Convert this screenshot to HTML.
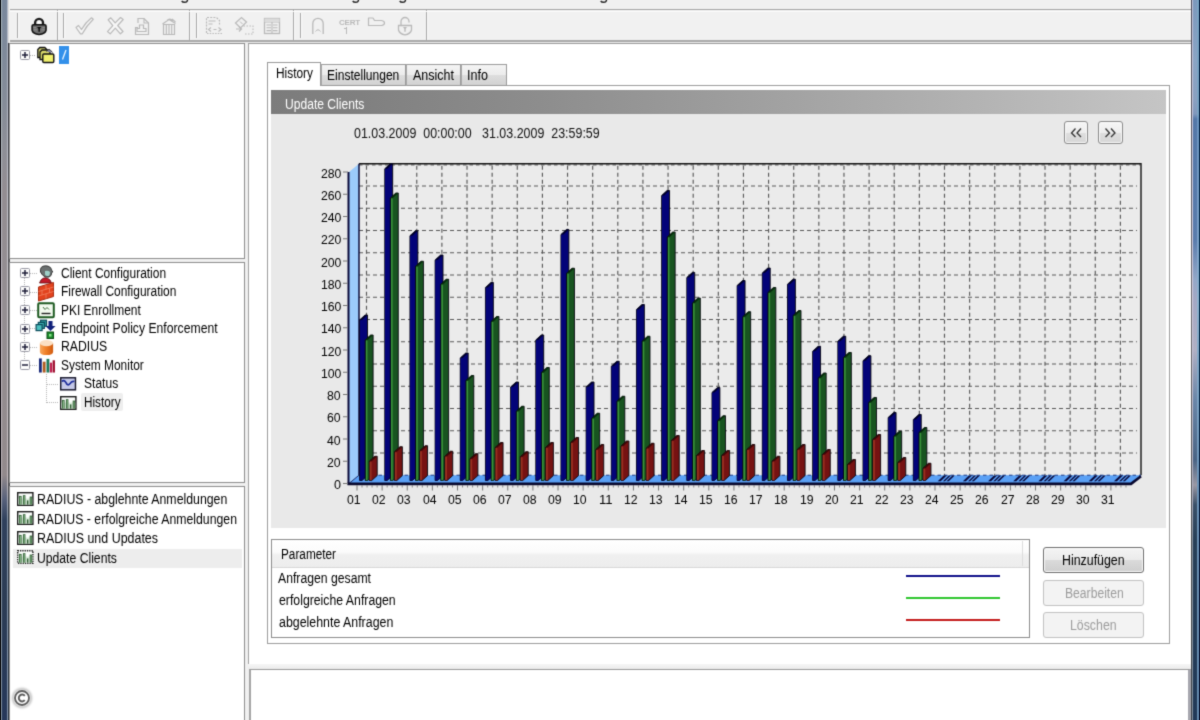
<!DOCTYPE html>
<html><head><meta charset="utf-8"><title>History</title>
<style>
html,body{margin:0;padding:0}
html{overflow:hidden;width:1200px;height:720px}
body{width:1200px;height:720px;position:relative;overflow:hidden;background:#f0f0f0;font-family:"Liberation Sans",sans-serif;font-size:13px;color:#000}
.t{position:absolute;white-space:pre;line-height:1;transform-origin:0 0}
.abs{position:absolute}
.pane{position:absolute;background:#fff;border:1px solid #8e8e8e;box-sizing:border-box}
svg{position:absolute;overflow:visible}
#clip{position:absolute;left:0;top:0;width:1200px;height:720px;overflow:hidden}
#w{position:absolute;left:0;top:0;width:1200px;height:720px;filter:url(#soft)}
</style></head><body><svg width="0" height="0" style="position:absolute"><defs><filter id="soft" x="-0.4%" y="-0.7%" width="100.8%" height="101.4%" color-interpolation-filters="sRGB"><feConvolveMatrix order="3" kernelMatrix="0.02 0.1 0.02 0.1 0.52 0.1 0.02 0.1 0.02" edgeMode="duplicate" preserveAlpha="true"/></filter></defs></svg><div id="clip"><div id="w">

<div style="position:absolute;left:-6px;top:-6px;width:1212px;height:732px;background:#f0f0f0"></div>
<div style="position:absolute;left:0px;top:-6px;width:8px;height:732px;background:linear-gradient(to bottom,#78879c 6px,#858c98 106px,#8e8f97 156px,#938d92 196px,#948e92 314px,#928a8c 481px,#56607a 506px,#2f405c 526px,#2c3c54 606px,#26385a 726px)"></div>
<div style="position:absolute;left:-6px;top:-6px;width:7px;height:732px;background:linear-gradient(to bottom,#000408 6px,#140c14 314px,#000004 506px,#000000 726px)"></div>
<div style="position:absolute;left:1px;top:-6px;width:1px;height:732px;background:linear-gradient(to bottom,#a8b6c0 6px,#b0bcc0 106px,#c8c0c8 314px,#c0b8bc 486px,#8a98a8 526px,#8494a4 726px)"></div>
<div style="position:absolute;left:7px;top:-6px;width:1px;height:732px;background:linear-gradient(to bottom,#b0b8c8 6px,#b8bcc8 106px,#d0ccd0 314px,#c8c0c4 486px,#8a9aac 526px,#8696ac 726px)"></div>
<div style="position:absolute;left:8px;top:43px;width:2px;height:683px;background:linear-gradient(to bottom,#34363f 0px,#34363f 57px,#55555b 157px,#5c5a5e 265px,#585659 437px,#2c3644 477px,#28323e 683px)"></div>
<div style="position:absolute;left:8px;top:-6px;width:1px;height:49px;background:#dcdcdc"></div>
<div style="position:absolute;left:1192px;top:-6px;width:8px;height:732px;background:linear-gradient(to bottom,#7c98bc 6px,#8aa4c4 66px,#8aa0c0 106px,#8098bc 120px,#5478a8 125px,#5a7cac 246px,#94a8c8 286px,#a4a8c4 306px,#b0b0c4 356px,#6a86a8 406px,#4a6484 466px,#9a98a4 491px,#3a5068 511px,#284058 546px,#223a58 726px)"></div>
<div style="position:absolute;left:1191px;top:-6px;width:1px;height:732px;background:linear-gradient(to bottom,#484858 6px,#68686e 306px,#404448 606px,#3a4048 726px)"></div>
<div style="position:absolute;left:1192px;top:-6px;width:1px;height:732px;background:linear-gradient(to bottom,#c0c4dc 6px,#d0cce0 306px,#b0b0c0 506px,#8a96a4 546px,#8492a0 726px)"></div>
<div style="position:absolute;left:1197px;top:-6px;width:2px;height:732px;background:linear-gradient(to bottom,#7aa4c4 6px,#7aa4c4 120px,#6a94c0 125px,#7aa0c8 246px,#90b4d0 306px,#7098bc 466px,#6a90b4 546px,#648aae 726px)"></div>
<div style="position:absolute;left:1198.5px;top:-6px;width:7.5px;height:732px;background:linear-gradient(to bottom,#00183a 6px,#002c4a 306px,#000a2c 606px,#000824 726px)"></div>
<div style="position:absolute;left:10px;top:9px;width:1181px;height:1px;background:#a5a5a5"></div>
<svg style="left:181px;top:0" width="8" height="4" viewBox="0 0 8 4"><path d="M6.500 -1 Q6.800 2.300 3.600 2.300 Q1.400 2.300 .8 .9" fill="none" stroke="#2a2a2a" stroke-width="1.500"/></svg>
<svg style="left:352px;top:0" width="8" height="4" viewBox="0 0 8 4"><path d="M6.500 -1 Q6.800 2.300 3.600 2.300 Q1.400 2.300 .8 .9" fill="none" stroke="#2a2a2a" stroke-width="1.500"/></svg>
<svg style="left:399px;top:0" width="8" height="4" viewBox="0 0 8 4"><path d="M6.500 -1 Q6.800 2.300 3.600 2.300 Q1.400 2.300 .8 .9" fill="none" stroke="#2a2a2a" stroke-width="1.500"/></svg>
<svg style="left:600px;top:0" width="8" height="4" viewBox="0 0 8 4"><path d="M6.500 -1 Q6.800 2.300 3.600 2.300 Q1.400 2.300 .8 .9" fill="none" stroke="#2a2a2a" stroke-width="1.500"/></svg>
<div style="position:absolute;left:10px;top:10px;width:1181px;height:30px;background:#f1f1f1"></div>
<div style="position:absolute;left:10px;top:40px;width:1181px;height:2px;background:#a9a9a9"></div>
<div style="position:absolute;left:10px;top:42px;width:1181px;height:2px;background:#ececec"></div>
<div style="position:absolute;left:17px;top:13px;width:1px;height:25px;background:#a8a8a8"></div><div style="position:absolute;left:18px;top:13px;width:1px;height:25px;background:#fdfdfd"></div>
<div style="position:absolute;left:63px;top:13px;width:1px;height:25px;background:#a8a8a8"></div><div style="position:absolute;left:64px;top:13px;width:1px;height:25px;background:#fdfdfd"></div>
<div style="position:absolute;left:196px;top:13px;width:1px;height:25px;background:#a8a8a8"></div><div style="position:absolute;left:197px;top:13px;width:1px;height:25px;background:#fdfdfd"></div>
<div style="position:absolute;left:300px;top:13px;width:1px;height:25px;background:#a8a8a8"></div><div style="position:absolute;left:301px;top:13px;width:1px;height:25px;background:#fdfdfd"></div>
<div style="position:absolute;left:57px;top:10px;width:1px;height:30px;background:#a8a8a8"></div><div style="position:absolute;left:58px;top:10px;width:1px;height:30px;background:#fafafa"></div>
<div style="position:absolute;left:189px;top:10px;width:1px;height:30px;background:#a8a8a8"></div><div style="position:absolute;left:190px;top:10px;width:1px;height:30px;background:#fafafa"></div>
<div style="position:absolute;left:293px;top:10px;width:1px;height:30px;background:#a8a8a8"></div><div style="position:absolute;left:294px;top:10px;width:1px;height:30px;background:#fafafa"></div>
<div style="position:absolute;left:426px;top:10px;width:1px;height:30px;background:#a8a8a8"></div><div style="position:absolute;left:427px;top:10px;width:1px;height:30px;background:#fafafa"></div>
<div style="position:absolute;left:10px;top:11px;width:1181px;height:1px;background:#fbfbfb"></div>
<svg style="left:30.500px;top:18.000px" width="16.500" height="17.600" viewBox="0 0 18 19">
<path d="M4.5 8 V5.2 a4.3 4.3 0 0 1 8.6 0 V8" fill="none" stroke="#1a1a1a" stroke-width="2.6"/>
<rect x="7.4" y="3.6" width="3" height="3" fill="#fff" stroke="none"/>
<path d="M1.2 8.6 q0 -1.4 1.6 -1.4 h12 q1.6 0 1.6 1.4 v4.6 q-1 4 -7.6 4.6 q-6.600 -.6 -7.600 -4.6 z" fill="#6e6e6e" stroke="#111" stroke-width="1.7"/>
<path d="M6.6 9.6 h4.600 l-1.500 2 v3.400 h-1.600 v-3.400 z" fill="#0a0a0a"/>
<path d="M2.5 10.500 h3 M12.300 10.500 h3 M2.900 12.800 h3.500 M11.500 12.800 h3.500" stroke="#9a9a9a" stroke-width=".9"/>
</svg>
<svg style="left:74px;top:16px" width="21" height="20" viewBox="0 0 21 20">
<path d="M2 11.500 L4.500 9.500 L7.500 13.500 Q11.500 6.500 17.500 1.800 L19.300 3.200 Q12.500 9.500 8.300 17.800 L6.500 17.800 Z" fill="#f6f6f6" stroke="#b9b9b9" stroke-width="1.2" stroke-linejoin="round"/>
</svg>
<svg style="left:105px;top:16px" width="21" height="20" viewBox="0 0 21 20">
<path d="M3.200 3.800 L5.800 1.800 L10.200 6.800 L15.500 1.500 L18.200 3.500 L12.700 9.500 L18 15.500 L15.400 17.800 L10.300 12.200 L5.200 17.800 L2.500 15.600 L7.800 9.600 Z" fill="#f6f6f6" stroke="#b9b9b9" stroke-width="1.2" stroke-linejoin="round"/>
</svg>
<svg style="left:134px;top:17px" width="16" height="19" viewBox="0 0 16 19">
<path d="M4 6 V1.500 h6 l4.500 4.500 V17.500 H1.500 V10.500 h2.500" fill="none" stroke="#b9b9b9" stroke-width="1.2"/>
<path d="M10 1.500 v4.500 h4.500" fill="none" stroke="#b9b9b9" stroke-width="1.100"/>
<path d="M5.500 8 h4 v3.500 h2.500 v3 h-9 v-3 h2.500 z" fill="none" stroke="#b9b9b9" stroke-width="1.200"/>
</svg>
<svg style="left:161px;top:17px" width="17" height="19" viewBox="0 0 17 19">
<path d="M2.500 7.500 h11 v10 h-11 z" fill="none" stroke="#b9b9b9" stroke-width="1.200"/>
<path d="M5.300 8 v9 M8 8 v9 M10.700 8 v9" stroke="#b9b9b9" stroke-width="1.100"/>
<path d="M1.500 7 L8 2.500 L14.500 6.500 M6 3.500 q3 -3 5.500 .5 M11 2 l3.500 3" fill="none" stroke="#b9b9b9" stroke-width="1.100"/>
</svg>
<svg style="left:205px;top:16px" width="20" height="19" viewBox="0 0 20 19">
<path d="M1.500 17 V1.500 h10 l3 3 v4" fill="none" stroke="#b9b9b9" stroke-width="1.200" stroke-dasharray="2 1.200"/>
<path d="M3.500 5 h7 M3.500 8 h4" stroke="#b9b9b9" stroke-width="1.100"/>
<path d="M6 11.500 l-2.500 2 l2.500 2 M13.500 11.500 l2.500 2 l-2.500 2 M8.500 13.500 h3" fill="none" stroke="#b9b9b9" stroke-width="1.100"/>
<path d="M2 17.500 h16" stroke="#b9b9b9" stroke-width="1.100" stroke-dasharray="1.500 1.200"/>
</svg>
<svg style="left:233px;top:16px" width="22" height="20" viewBox="0 0 22 20">
<path d="M2.500 7 L8.500 1.500 L13.500 6 L7.500 12 Z" fill="none" stroke="#b9b9b9" stroke-width="1.200"/>
<path d="M7 5.500 l2.500 2.500" stroke="#b9b9b9" stroke-width="1"/>
<path d="M3 13 h5 M6 10.500 l2.500 2.500 l-2.500 2.500" fill="none" stroke="#b9b9b9" stroke-width="1.200"/>
<path d="M10.500 10 h9.500 v8 h-9.500" fill="none" stroke="#b9b9b9" stroke-width="1.100" stroke-dasharray="1.500 1.500"/>
</svg>
<svg style="left:263px;top:17px" width="18" height="18" viewBox="0 0 18 18">
<rect x="1.500" y="1.500" width="15" height="15" fill="none" stroke="#b9b9b9" stroke-width="1.300"/>
<path d="M1.500 5 h15 M3.500 8 h4.500 M10 8 h4.500 M3.500 10.800 h4.500 M10 10.800 h4.500 M3.500 13.600 h4.500 M10 13.600 h4.500 M9 5 v11.500" stroke="#b9b9b9" stroke-width="1.100"/>
<rect x="1.500" y="1.500" width="15" height="3.500" fill="#dcdcdc" stroke="none"/>
</svg>
<svg style="left:311px;top:17px" width="14" height="18" viewBox="0 0 14 18">
<path d="M1.800 17 V6.500 a5.200 5.200 0 0 1 10.400 0 V17" fill="none" stroke="#b9b9b9" stroke-width="1.300"/>
<path d="M4.500 14.500 q2.500 -3.500 5 0" fill="none" stroke="#b9b9b9" stroke-width="1"/>
</svg>
<span class="t" style="left:339px;top:18.500px;font-size:8px;font-weight:bold;color:#b9b9b9;letter-spacing:-.2px">CERT</span>
<div style="position:absolute;left:346px;top:27px;width:1px;height:7px;background:#b9b9b9"></div>
<div style="position:absolute;left:344px;top:28px;width:2px;height:1px;background:#b9b9b9"></div>
<svg style="left:367px;top:16px" width="19" height="12" viewBox="0 0 19 12">
<path d="M1.500 9.500 V2 h4.500 l1.500 2.500 h7 q3 .5 3 2.500 q0 2 -3 2.500 z" fill="none" stroke="#b9b9b9" stroke-width="1.200" stroke-linejoin="round"/>
</svg>
<svg style="left:397px;top:16px" width="16" height="20" viewBox="0 0 16 20">
<path d="M4 9 V5.500 a4 4 0 0 1 8 0 V6.500" fill="none" stroke="#b9b9b9" stroke-width="1.300"/>
<path d="M1.500 9.500 h13 v4.500 q-1 4 -6.500 4.800 q-5.500 -.8 -6.500 -4.800 z" fill="none" stroke="#b9b9b9" stroke-width="1.300"/>
<path d="M6 11 h4 l-1.300 1.800 v3 h-1.400 v-3 z" fill="#b9b9b9"/>
</svg>
<div class="pane" style="left:9px;top:43px;width:236px;height:216px"></div>
<div class="pane" style="left:9px;top:262px;width:236px;height:221px"></div>
<div class="pane" style="left:9px;top:486px;width:236px;height:246px"></div>
<div style="position:absolute;left:245px;top:44px;width:3px;height:682px;background:#f0f0f0"></div>
<svg style="left:20px;top:50px" width="10" height="10" viewBox="0 0 10 10"><rect x=".5" y=".5" width="9" height="9" rx="1" fill="#fdfdfd" stroke="#9a9aa5" stroke-width="1"/><path d="M2 5 h6" stroke="#1e1e38" stroke-width="1.500"/><path d="M5 2 v6" stroke="#1e1e38" stroke-width="1.500"/></svg>
<div style="position:absolute;left:30px;top:55px;width:6px;height:1px;background:repeating-linear-gradient(to right,#b0b0b0 0 1px,transparent 1px 2px)"></div>
<svg style="left:36px;top:46px" width="20" height="18" viewBox="0 0 20 18">
<path d="M1.800 3.500 l2 -2 h5 l2 2 v8 h-9 z" fill="#c9c96a" stroke="#111" stroke-width="1.300"/>
<path d="M4 6 l2 -2 h5.500 l2.500 2 v7.500 h-10 z" fill="#d8d86a" stroke="#111" stroke-width="1.300"/>
<path d="M10.500 5.500 l1.500 -1.800 h2 l2.500 2.800" fill="#8a8ab0" stroke="#333" stroke-width="1"/>
<rect x="6.800" y="8" width="11" height="8.500" rx="1" fill="#f1f16e" stroke="#111" stroke-width="1.400"/>
</svg>
<div style="position:absolute;left:59px;top:46px;width:10px;height:18px;background:#3390ea"></div>
<svg style="left:59px;top:46px" width="10" height="18"><path d="M3.500 13.500 L7 4" stroke="#e8f4ff" stroke-width="1.300"/></svg>
<div style="position:absolute;left:24px;top:278px;width:1px;height:88px;background:repeating-linear-gradient(to bottom,#b5b5b5 0 1px,transparent 1px 2px)"></div>
<div style="position:absolute;left:46px;top:374px;width:1px;height:29px;background:repeating-linear-gradient(to bottom,#b5b5b5 0 1px,transparent 1px 2px)"></div>
<svg style="left:20px;top:268px" width="10" height="10" viewBox="0 0 10 10"><rect x=".5" y=".5" width="9" height="9" rx="1" fill="#fdfdfd" stroke="#9a9aa5" stroke-width="1"/><path d="M2 5 h6" stroke="#1e1e38" stroke-width="1.500"/><path d="M5 2 v6" stroke="#1e1e38" stroke-width="1.500"/></svg>
<div style="position:absolute;left:30px;top:273px;width:7px;height:1px;background:repeating-linear-gradient(to right,#b5b5b5 0 1px,transparent 1px 2px)"></div>
<span class="t" style="left:61.40px;top:265.75px;font-size:14px;color:#000;transform:scaleX(0.8547);">Client Configuration</span>
<svg style="left:20px;top:286px" width="10" height="10" viewBox="0 0 10 10"><rect x=".5" y=".5" width="9" height="9" rx="1" fill="#fdfdfd" stroke="#9a9aa5" stroke-width="1"/><path d="M2 5 h6" stroke="#1e1e38" stroke-width="1.500"/><path d="M5 2 v6" stroke="#1e1e38" stroke-width="1.500"/></svg>
<div style="position:absolute;left:30px;top:292px;width:7px;height:1px;background:repeating-linear-gradient(to right,#b5b5b5 0 1px,transparent 1px 2px)"></div>
<span class="t" style="left:61.40px;top:284.15px;font-size:14px;color:#000;transform:scaleX(0.8523);">Firewall Configuration</span>
<svg style="left:20px;top:305px" width="10" height="10" viewBox="0 0 10 10"><rect x=".5" y=".5" width="9" height="9" rx="1" fill="#fdfdfd" stroke="#9a9aa5" stroke-width="1"/><path d="M2 5 h6" stroke="#1e1e38" stroke-width="1.500"/><path d="M5 2 v6" stroke="#1e1e38" stroke-width="1.500"/></svg>
<div style="position:absolute;left:30px;top:310px;width:7px;height:1px;background:repeating-linear-gradient(to right,#b5b5b5 0 1px,transparent 1px 2px)"></div>
<span class="t" style="left:61.40px;top:302.65px;font-size:14px;color:#000;transform:scaleX(0.8546);">PKI Enrollment</span>
<svg style="left:20px;top:324px" width="10" height="10" viewBox="0 0 10 10"><rect x=".5" y=".5" width="9" height="9" rx="1" fill="#fdfdfd" stroke="#9a9aa5" stroke-width="1"/><path d="M2 5 h6" stroke="#1e1e38" stroke-width="1.500"/><path d="M5 2 v6" stroke="#1e1e38" stroke-width="1.500"/></svg>
<div style="position:absolute;left:30px;top:328px;width:7px;height:1px;background:repeating-linear-gradient(to right,#b5b5b5 0 1px,transparent 1px 2px)"></div>
<span class="t" style="left:61.40px;top:321.15px;font-size:14px;color:#000;transform:scaleX(0.8711);">Endpoint Policy Enforcement</span>
<svg style="left:20px;top:342px" width="10" height="10" viewBox="0 0 10 10"><rect x=".5" y=".5" width="9" height="9" rx="1" fill="#fdfdfd" stroke="#9a9aa5" stroke-width="1"/><path d="M2 5 h6" stroke="#1e1e38" stroke-width="1.500"/><path d="M5 2 v6" stroke="#1e1e38" stroke-width="1.500"/></svg>
<div style="position:absolute;left:30px;top:347px;width:7px;height:1px;background:repeating-linear-gradient(to right,#b5b5b5 0 1px,transparent 1px 2px)"></div>
<span class="t" style="left:61.40px;top:339.45px;font-size:14px;color:#000;transform:scaleX(0.8732);">RADIUS</span>
<svg style="left:20px;top:360px" width="10" height="10" viewBox="0 0 10 10"><rect x=".5" y=".5" width="9" height="9" rx="1" fill="#fdfdfd" stroke="#9a9aa5" stroke-width="1"/><path d="M2 5 h6" stroke="#1e1e38" stroke-width="1.500"/></svg>
<div style="position:absolute;left:30px;top:365px;width:7px;height:1px;background:repeating-linear-gradient(to right,#b5b5b5 0 1px,transparent 1px 2px)"></div>
<span class="t" style="left:61.40px;top:357.95px;font-size:14px;color:#000;transform:scaleX(0.8514);">System Monitor</span>
<div style="position:absolute;left:47px;top:384px;width:12px;height:1px;background:repeating-linear-gradient(to right,#b5b5b5 0 1px,transparent 1px 2px)"></div>
<span class="t" style="left:83.60px;top:376.35px;font-size:14px;color:#000;transform:scaleX(0.8614);">Status</span>
<div style="position:absolute;left:47px;top:402px;width:12px;height:1px;background:repeating-linear-gradient(to right,#b5b5b5 0 1px,transparent 1px 2px)"></div>
<div style="position:absolute;left:81px;top:393px;width:42px;height:18px;background:#eeeeee;border-radius:2px"></div>
<span class="t" style="left:83.60px;top:394.75px;font-size:14px;color:#000;transform:scaleX(0.8402);">History</span>
<svg style="left:37px;top:264px" width="18" height="20" viewBox="0 0 18 20">
<path d="M4 16 q4 -4.500 9 0 l1.500 3 h-12 z" fill="#c21a2a" stroke="#5a0a10" stroke-width=".8"/>
<path d="M3.500 8 q-1 -6 5 -6.200 q5.500 .2 6 4.200 l1.300 2 l-1.200 .6 q.3 3.400 -2.600 4.400 q-4 1 -6.500 -2 z" fill="#6b7070" stroke="#2a2a2a" stroke-width=".9"/>
<path d="M8 7 q3 -1 5 1 q0 3 -1.500 4 q-2.500 .5 -3.500 -1.500 z" fill="#9ed0c8"/>
</svg>
<svg style="left:37px;top:281px" width="18" height="21" viewBox="0 0 18 21">
<path d="M1.500 6 L16.500 1.500 V15.500 L1.500 20 Z" fill="#e2431e" stroke="#a82a10" stroke-width="1"/>
<path d="M1.500 10.500 L16.500 6 M1.500 15 L16.500 10.500 M9 3.800 v4.500 M5 9.500 v4.500 M12.500 7.300 v4.500 M9 13 v4.500" stroke="#f08060" stroke-width=".8"/>
</svg>
<svg style="left:37px;top:302px" width="18" height="17" viewBox="0 0 18 17">
<rect x="1.200" y="1.200" width="15.600" height="14" rx="1" fill="#f4fbf0" stroke="#1e5a22" stroke-width="2"/>
<path d="M4.500 11.500 h9" stroke="#222" stroke-width="1.400"/>
<path d="M6 5 l2 2.500 l2 -2 l2 2" fill="none" stroke="#3a6a3a" stroke-width="1"/>
</svg>
<svg style="left:35px;top:319px" width="22" height="20" viewBox="0 0 22 20">
<rect x="5.500" y="1.200" width="6" height="6" fill="#2a9a9a" stroke="#0a4a5a" stroke-width="1.200"/>
<rect x="3.300" y="3.400" width="6" height="6" fill="#3ab0b0" stroke="#0a4a5a" stroke-width="1.200"/>
<rect x="1.100" y="5.600" width="6" height="6" fill="#4cc0c0" stroke="#0a4a5a" stroke-width="1.200"/>
<path d="M13.500 2 h4 v5 h3 l-5 5 l-5 -5 h3 z" fill="#10207a"/>
<rect x="12" y="13" width="6.500" height="6.500" fill="#1a8a2a" stroke="#0a4a12" stroke-width="1"/>
<rect x="14" y="15" width="2.500" height="2.500" fill="#8ae08a"/>
</svg>
<svg style="left:38.500px;top:338.500px" width="15" height="17" viewBox="0 0 17 19">
<defs><linearGradient id="rg" x1="0" x2="1"><stop offset="0" stop-color="#f6a860"/><stop offset=".45" stop-color="#f08028"/><stop offset="1" stop-color="#d05a10"/></linearGradient></defs>
<path d="M1 4.500 v10 q0 3.500 7.500 3.500 q7.500 0 7.500 -3.500 v-10 z" fill="url(#rg)"/>
<ellipse cx="8.500" cy="4.500" rx="7.500" ry="3.500" fill="#fbe0c4"/>
</svg>
<svg style="left:37.500px;top:356.800px" width="17" height="16" viewBox="0 0 18 17">
<rect x="1" y="1.500" width="3" height="15" fill="#1a2a7a"/>
<rect x="5" y="5" width="3" height="11.500" fill="#b05a20"/>
<rect x="9" y="2" width="3" height="14.500" fill="#1a7a5a"/>
<rect x="12.500" y="6" width="2.500" height="10.500" fill="#c02050"/>
<rect x="15.500" y="3.500" width="2.500" height="13" fill="#a01030"/>
</svg>
<svg style="left:59.800px;top:377.300px" width="16.200" height="13.600" viewBox="0 0 18 15">
<rect x=".8" y=".8" width="16.400" height="13.400" fill="#c5c9e8" stroke="#15152a" stroke-width="1.600"/>
<path d="M2 5 q2.500 -2.500 4.500 1 q2 4.500 4.500 1.500 q2 -3.500 5 -2.500" fill="none" stroke="#1a2a9a" stroke-width="1.800"/>
</svg>
<svg style="left:59.8px;top:395.8px" width="17" height="14" viewBox="0 0 17 14"><rect x=".7" y=".7" width="15.200" height="12.600" fill="#fcfefc" stroke="#1c1c1c" stroke-width="1.400"/><rect x="1.500" y="6.500" width="13.700" height="6" fill="#dcecdc"/><rect x="1.9" y="3.9" width="2.7" height="8.7" fill="#2e5e32"/><rect x="2.8" y="4.7" width="1.0" height="7.9" fill="#9cc89c"/><rect x="5.9" y="3.2" width="2.5" height="9.4" fill="#2e5e32"/><rect x="6.8" y="4.0" width="0.8" height="8.6" fill="#9cc89c"/><rect x="9.9" y="8.4" width="1.5" height="4.2" fill="#2e5e32"/><rect x="12.7" y="4.6" width="2.5" height="8.0" fill="#2e5e32"/><rect x="13.6" y="5.4" width="0.8" height="7.2" fill="#9cc89c"/></svg>
<div style="position:absolute;left:13px;top:549px;width:229px;height:19px;background:#ededed"></div>
<svg style="left:17.1px;top:491.5px" width="17" height="14" viewBox="0 0 17 14"><rect x=".7" y=".7" width="15.200" height="12.600" fill="#fcfefc" stroke="#1c1c1c" stroke-width="1.400"/><rect x="1.500" y="6.500" width="13.700" height="6" fill="#dcecdc"/><rect x="1.9" y="3.9" width="2.7" height="8.7" fill="#2e5e32"/><rect x="2.8" y="4.7" width="1.0" height="7.9" fill="#9cc89c"/><rect x="5.9" y="3.2" width="2.5" height="9.4" fill="#2e5e32"/><rect x="6.8" y="4.0" width="0.8" height="8.6" fill="#9cc89c"/><rect x="9.9" y="8.4" width="1.5" height="4.2" fill="#2e5e32"/><rect x="12.7" y="4.6" width="2.5" height="8.0" fill="#2e5e32"/><rect x="13.6" y="5.4" width="0.8" height="7.2" fill="#9cc89c"/></svg>
<span class="t" style="left:37.30px;top:492.25px;font-size:14px;color:#000;transform:scaleX(0.8796);">RADIUS - abglehnte Anmeldungen</span>
<svg style="left:17.1px;top:511.19999999999993px" width="17" height="14" viewBox="0 0 17 14"><rect x=".7" y=".7" width="15.200" height="12.600" fill="#fcfefc" stroke="#1c1c1c" stroke-width="1.400"/><rect x="1.500" y="6.500" width="13.700" height="6" fill="#dcecdc"/><rect x="1.9" y="3.9" width="2.7" height="8.7" fill="#2e5e32"/><rect x="2.8" y="4.7" width="1.0" height="7.9" fill="#9cc89c"/><rect x="5.9" y="3.2" width="2.5" height="9.4" fill="#2e5e32"/><rect x="6.8" y="4.0" width="0.8" height="8.6" fill="#9cc89c"/><rect x="9.9" y="8.4" width="1.5" height="4.2" fill="#2e5e32"/><rect x="12.7" y="4.6" width="2.5" height="8.0" fill="#2e5e32"/><rect x="13.6" y="5.4" width="0.8" height="7.2" fill="#9cc89c"/></svg>
<span class="t" style="left:37.30px;top:511.95px;font-size:14px;color:#000;transform:scaleX(0.8771);">RADIUS - erfolgreiche Anmeldungen</span>
<svg style="left:17.1px;top:530.6px" width="17" height="14" viewBox="0 0 17 14"><rect x=".7" y=".7" width="15.200" height="12.600" fill="#fcfefc" stroke="#1c1c1c" stroke-width="1.400"/><rect x="1.500" y="6.500" width="13.700" height="6" fill="#dcecdc"/><rect x="1.9" y="3.9" width="2.7" height="8.7" fill="#2e5e32"/><rect x="2.8" y="4.7" width="1.0" height="7.9" fill="#9cc89c"/><rect x="5.9" y="3.2" width="2.5" height="9.4" fill="#2e5e32"/><rect x="6.8" y="4.0" width="0.8" height="8.6" fill="#9cc89c"/><rect x="9.9" y="8.4" width="1.5" height="4.2" fill="#2e5e32"/><rect x="12.7" y="4.6" width="2.5" height="8.0" fill="#2e5e32"/><rect x="13.6" y="5.4" width="0.8" height="7.2" fill="#9cc89c"/></svg>
<span class="t" style="left:37.30px;top:531.35px;font-size:14px;color:#000;transform:scaleX(0.8885);">RADIUS und Updates</span>
<svg style="left:17.1px;top:550.3px" width="17" height="14" viewBox="0 0 17 14"><rect x=".7" y=".7" width="15.200" height="12.600" fill="#fcfefc" stroke="#1c1c1c" stroke-width="1.400" stroke-dasharray="1.300 1"/><rect x="1.500" y="6.500" width="13.700" height="6" fill="#dcecdc"/><rect x="1.9" y="3.9" width="2.7" height="8.7" fill="#2e5e32"/><rect x="2.8" y="4.7" width="1.0" height="7.9" fill="#9cc89c"/><rect x="5.9" y="3.2" width="2.5" height="9.4" fill="#2e5e32"/><rect x="6.8" y="4.0" width="0.8" height="8.6" fill="#9cc89c"/><rect x="9.9" y="8.4" width="1.5" height="4.2" fill="#2e5e32"/><rect x="12.7" y="4.6" width="2.5" height="8.0" fill="#2e5e32"/><rect x="13.6" y="5.4" width="0.8" height="7.2" fill="#9cc89c"/></svg>
<span class="t" style="left:37.30px;top:551.05px;font-size:14px;color:#000;transform:scaleX(0.8701);">Update Clients</span>
<svg style="left:9.200px;top:684.800px" width="26" height="26" viewBox="0 0 26 26">
<defs><radialGradient id="cg"><stop offset=".55" stop-color="#fff" stop-opacity="1"/><stop offset=".75" stop-color="#bbb" stop-opacity=".7"/><stop offset="1" stop-color="#fff" stop-opacity="0"/></radialGradient></defs>
<circle cx="13" cy="13" r="12.500" fill="url(#cg)"/>
<circle cx="13" cy="13" r="7" fill="#fff" stroke="#5c5c5c" stroke-width="1.800"/>
<path d="M15.800 10.800 a3.400 3.400 0 1 0 0 4.400" fill="none" stroke="#5c5c5c" stroke-width="2"/>
</svg>
<div style="position:absolute;left:248px;top:43px;width:943px;height:621px;background:#fff;border-top:1px solid #9a9a9a;border-left:1px solid #a2a2a2;box-sizing:border-box"></div>
<div style="position:absolute;left:248px;top:664px;width:943px;height:5px;background:linear-gradient(to bottom,#f6f6f6,#ebebeb)"></div>
<div style="position:absolute;left:249px;top:669px;width:942px;height:57px;background:#fff;border-top:1px solid #9a9a9a;border-left:2px solid #a4a4a4;border-right:3px solid #a6a6ae;box-sizing:border-box"></div>
<div class="abs" style="left:267px;top:85px;width:903px;height:559px;box-sizing:border-box;border:1px solid #9c9c9c;background:#fff"></div>
<div class="abs" style="left:321px;top:64px;width:85px;height:22px;box-sizing:border-box;border:1px solid #9a9a9a;border-left-color:#a8a8a8;background:linear-gradient(to bottom,#f4f4f4 0,#ececec 48%,#dddddd 52%,#d2d2d2 100%)"></div>
<span class="t" style="left:327.20px;top:68.35px;font-size:14px;color:#000;transform:scaleX(0.8601);">Einstellungen</span>
<div class="abs" style="left:406px;top:64px;width:55px;height:22px;box-sizing:border-box;border:1px solid #9a9a9a;border-left-color:#a8a8a8;background:linear-gradient(to bottom,#f4f4f4 0,#ececec 48%,#dddddd 52%,#d2d2d2 100%)"></div>
<span class="t" style="left:412.50px;top:68.35px;font-size:14px;color:#000;transform:scaleX(0.8928);">Ansicht</span>
<div class="abs" style="left:461px;top:64px;width:46px;height:22px;box-sizing:border-box;border:1px solid #9a9a9a;border-left-color:#a8a8a8;background:linear-gradient(to bottom,#f4f4f4 0,#ececec 48%,#dddddd 52%,#d2d2d2 100%)"></div>
<span class="t" style="left:467.30px;top:68.35px;font-size:14px;color:#000;transform:scaleX(0.8990);">Info</span>
<div class="abs" style="left:267px;top:62px;width:54px;height:24px;box-sizing:border-box;border:1px solid #9a9a9a;border-bottom:none;background:#fff"></div>
<span class="t" style="left:276.20px;top:66.35px;font-size:14px;color:#000;transform:scaleX(0.8494);">History</span>
<div style="position:absolute;left:271px;top:90px;width:895px;height:24px;background:linear-gradient(to right,#7c7c7c 0,#808080 10%,#8d8d8d 30%,#a0a0a0 55%,#b4b4b4 80%,#c5c5c5 100%)"></div>
<span class="t" style="left:284.50px;top:96.75px;font-size:14px;color:#fff;transform:scaleX(0.8636);">Update Clients</span>
<div style="position:absolute;left:271px;top:114px;width:895px;height:414px;background:#e9e9e9"></div>
<span class="t" style="left:353.80px;top:125.75px;font-size:14px;color:#111;transform:scaleX(0.8891);">01.03.2009  00:00:00   31.03.2009  23:59:59</span>
<div class="abs" style="left:1064px;top:121px;width:24px;height:23px;box-sizing:border-box;border:1px solid #8a8a8a;border-radius:3px;background:linear-gradient(to bottom,#f6f6f6 0,#ededed 50%,#dedede 52%,#d6d6d6 100%);box-shadow:inset 0 0 0 1px #fafafa"></div>
<div class="abs" style="left:1098px;top:121px;width:24.5px;height:23px;box-sizing:border-box;border:1px solid #8a8a8a;border-radius:3px;background:linear-gradient(to bottom,#f6f6f6 0,#ededed 50%,#dedede 52%,#d6d6d6 100%);box-shadow:inset 0 0 0 1px #fafafa"></div>
<svg style="left:1064px;top:121px" width="24" height="23"><path d="M11.500 7.500 L7.500 12 L11.500 16 M17 7.500 L13 12 L17 16" fill="none" stroke="#333" stroke-width="1.300"/></svg>
<svg style="left:1098px;top:121px" width="24" height="23"><path d="M7.500 7.500 L11.500 12 L7.500 16 M13 7.500 L17 12 L13 16" fill="none" stroke="#333" stroke-width="1.300"/></svg>
<svg style="left:0;top:0" width="1200" height="720" viewBox="0 0 1200 720">
<rect x="359.0" y="163.70" width="782.0" height="311.50" fill="#ebebeb"/>
<path d="M359.0 452.95 H1137.0" stroke="#585858" stroke-width="1.150" stroke-dasharray="4 3" fill="none"/>
<path d="M359.0 430.70 H1137.0" stroke="#585858" stroke-width="1.150" stroke-dasharray="4 3" fill="none"/>
<path d="M359.0 408.45 H1137.0" stroke="#585858" stroke-width="1.150" stroke-dasharray="4 3" fill="none"/>
<path d="M359.0 386.20 H1137.0" stroke="#585858" stroke-width="1.150" stroke-dasharray="4 3" fill="none"/>
<path d="M359.0 363.95 H1137.0" stroke="#585858" stroke-width="1.150" stroke-dasharray="4 3" fill="none"/>
<path d="M359.0 341.70 H1137.0" stroke="#585858" stroke-width="1.150" stroke-dasharray="4 3" fill="none"/>
<path d="M359.0 319.45 H1137.0" stroke="#585858" stroke-width="1.150" stroke-dasharray="4 3" fill="none"/>
<path d="M359.0 297.20 H1137.0" stroke="#585858" stroke-width="1.150" stroke-dasharray="4 3" fill="none"/>
<path d="M359.0 274.95 H1137.0" stroke="#585858" stroke-width="1.150" stroke-dasharray="4 3" fill="none"/>
<path d="M359.0 252.70 H1137.0" stroke="#585858" stroke-width="1.150" stroke-dasharray="4 3" fill="none"/>
<path d="M359.0 230.45 H1137.0" stroke="#585858" stroke-width="1.150" stroke-dasharray="4 3" fill="none"/>
<path d="M359.0 208.20 H1137.0" stroke="#585858" stroke-width="1.150" stroke-dasharray="4 3" fill="none"/>
<path d="M359.0 185.95 H1137.0" stroke="#585858" stroke-width="1.150" stroke-dasharray="4 3" fill="none"/>
<path d="M366.50 165.70 V475.20" stroke="#585858" stroke-width="1.150" stroke-dasharray="4 3" fill="none"/>
<path d="M391.63 165.70 V475.20" stroke="#585858" stroke-width="1.150" stroke-dasharray="4 3" fill="none"/>
<path d="M416.76 165.70 V475.20" stroke="#585858" stroke-width="1.150" stroke-dasharray="4 3" fill="none"/>
<path d="M441.89 165.70 V475.20" stroke="#585858" stroke-width="1.150" stroke-dasharray="4 3" fill="none"/>
<path d="M467.02 165.70 V475.20" stroke="#585858" stroke-width="1.150" stroke-dasharray="4 3" fill="none"/>
<path d="M492.15 165.70 V475.20" stroke="#585858" stroke-width="1.150" stroke-dasharray="4 3" fill="none"/>
<path d="M517.28 165.70 V475.20" stroke="#585858" stroke-width="1.150" stroke-dasharray="4 3" fill="none"/>
<path d="M542.41 165.70 V475.20" stroke="#585858" stroke-width="1.150" stroke-dasharray="4 3" fill="none"/>
<path d="M567.54 165.70 V475.20" stroke="#585858" stroke-width="1.150" stroke-dasharray="4 3" fill="none"/>
<path d="M592.67 165.70 V475.20" stroke="#585858" stroke-width="1.150" stroke-dasharray="4 3" fill="none"/>
<path d="M617.80 165.70 V475.20" stroke="#585858" stroke-width="1.150" stroke-dasharray="4 3" fill="none"/>
<path d="M642.93 165.70 V475.20" stroke="#585858" stroke-width="1.150" stroke-dasharray="4 3" fill="none"/>
<path d="M668.06 165.70 V475.20" stroke="#585858" stroke-width="1.150" stroke-dasharray="4 3" fill="none"/>
<path d="M693.19 165.70 V475.20" stroke="#585858" stroke-width="1.150" stroke-dasharray="4 3" fill="none"/>
<path d="M718.32 165.70 V475.20" stroke="#585858" stroke-width="1.150" stroke-dasharray="4 3" fill="none"/>
<path d="M743.45 165.70 V475.20" stroke="#585858" stroke-width="1.150" stroke-dasharray="4 3" fill="none"/>
<path d="M768.58 165.70 V475.20" stroke="#585858" stroke-width="1.150" stroke-dasharray="4 3" fill="none"/>
<path d="M793.71 165.70 V475.20" stroke="#585858" stroke-width="1.150" stroke-dasharray="4 3" fill="none"/>
<path d="M818.84 165.70 V475.20" stroke="#585858" stroke-width="1.150" stroke-dasharray="4 3" fill="none"/>
<path d="M843.97 165.70 V475.20" stroke="#585858" stroke-width="1.150" stroke-dasharray="4 3" fill="none"/>
<path d="M869.10 165.70 V475.20" stroke="#585858" stroke-width="1.150" stroke-dasharray="4 3" fill="none"/>
<path d="M894.23 165.70 V475.20" stroke="#585858" stroke-width="1.150" stroke-dasharray="4 3" fill="none"/>
<path d="M919.36 165.70 V475.20" stroke="#585858" stroke-width="1.150" stroke-dasharray="4 3" fill="none"/>
<path d="M944.49 165.70 V475.20" stroke="#585858" stroke-width="1.150" stroke-dasharray="4 3" fill="none"/>
<path d="M969.62 165.70 V475.20" stroke="#585858" stroke-width="1.150" stroke-dasharray="4 3" fill="none"/>
<path d="M994.75 165.70 V475.20" stroke="#585858" stroke-width="1.150" stroke-dasharray="4 3" fill="none"/>
<path d="M1019.88 165.70 V475.20" stroke="#585858" stroke-width="1.150" stroke-dasharray="4 3" fill="none"/>
<path d="M1045.01 165.70 V475.20" stroke="#585858" stroke-width="1.150" stroke-dasharray="4 3" fill="none"/>
<path d="M1070.14 165.70 V475.20" stroke="#585858" stroke-width="1.150" stroke-dasharray="4 3" fill="none"/>
<path d="M1095.27 165.70 V475.20" stroke="#585858" stroke-width="1.150" stroke-dasharray="4 3" fill="none"/>
<path d="M1120.40 165.70 V475.20" stroke="#585858" stroke-width="1.150" stroke-dasharray="4 3" fill="none"/>
<path d="M359.0 163.70 H1141.0 V475.20" stroke="#111" stroke-width="1.400" fill="none"/>
<path d="M359.0 164.90 H1141.0" stroke="#444" stroke-width="1" stroke-dasharray="3.500 3" fill="none"/>
<path d="M349.0 172.00 L359.0 163.70 V475.20 L349.0 483.50 Z" fill="#9ccbfb"/>
<path d="M359.0 163.70 V475.20" stroke="#0c0c3a" stroke-width="1.500"/>
<path d="M349.0 483.50 L359.0 475.20 H1141.0 L1131.0 483.50 Z" fill="#5aa0f5"/>
<path d="M359.0 475.20 H1141.0" stroke="#1a3a8a" stroke-width="1" stroke-dasharray="3.500 3"/>
<path d="M349.0 483.50 L359.0 475.20" stroke="#1a2a6a" stroke-width="1"/>
<path d="M348.5 172.00 V484.50" stroke="#0a0a3a" stroke-width="2"/>
<path d="M347.5 483.90 H1131.0 L1141.0 476.20" stroke="#08082e" stroke-width="2.600" fill="none"/>
<path d="M343.0 483.50 H348.0" stroke="#777" stroke-width="1"/>
<path d="M343.0 461.25 H348.0" stroke="#777" stroke-width="1"/>
<path d="M343.0 439.00 H348.0" stroke="#777" stroke-width="1"/>
<path d="M343.0 416.75 H348.0" stroke="#777" stroke-width="1"/>
<path d="M343.0 394.50 H348.0" stroke="#777" stroke-width="1"/>
<path d="M343.0 372.25 H348.0" stroke="#777" stroke-width="1"/>
<path d="M343.0 350.00 H348.0" stroke="#777" stroke-width="1"/>
<path d="M343.0 327.75 H348.0" stroke="#777" stroke-width="1"/>
<path d="M343.0 305.50 H348.0" stroke="#777" stroke-width="1"/>
<path d="M343.0 283.25 H348.0" stroke="#777" stroke-width="1"/>
<path d="M343.0 261.00 H348.0" stroke="#777" stroke-width="1"/>
<path d="M343.0 238.75 H348.0" stroke="#777" stroke-width="1"/>
<path d="M343.0 216.50 H348.0" stroke="#777" stroke-width="1"/>
<path d="M343.0 194.25 H348.0" stroke="#777" stroke-width="1"/>
<path d="M343.0 172.00 H348.0" stroke="#777" stroke-width="1"/>
<path d="M357.00 485.00 v5.500" stroke="#777" stroke-width="1"/>
<path d="M362.03 485.00 v2.500" stroke="#888" stroke-width="1"/>
<path d="M367.05 485.00 v2.500" stroke="#888" stroke-width="1"/>
<path d="M372.08 485.00 v2.500" stroke="#888" stroke-width="1"/>
<path d="M377.10 485.00 v2.500" stroke="#888" stroke-width="1"/>
<path d="M382.13 485.00 v5.500" stroke="#777" stroke-width="1"/>
<path d="M387.16 485.00 v2.500" stroke="#888" stroke-width="1"/>
<path d="M392.18 485.00 v2.500" stroke="#888" stroke-width="1"/>
<path d="M397.21 485.00 v2.500" stroke="#888" stroke-width="1"/>
<path d="M402.23 485.00 v2.500" stroke="#888" stroke-width="1"/>
<path d="M407.26 485.00 v5.500" stroke="#777" stroke-width="1"/>
<path d="M412.29 485.00 v2.500" stroke="#888" stroke-width="1"/>
<path d="M417.31 485.00 v2.500" stroke="#888" stroke-width="1"/>
<path d="M422.34 485.00 v2.500" stroke="#888" stroke-width="1"/>
<path d="M427.36 485.00 v2.500" stroke="#888" stroke-width="1"/>
<path d="M432.39 485.00 v5.500" stroke="#777" stroke-width="1"/>
<path d="M437.42 485.00 v2.500" stroke="#888" stroke-width="1"/>
<path d="M442.44 485.00 v2.500" stroke="#888" stroke-width="1"/>
<path d="M447.47 485.00 v2.500" stroke="#888" stroke-width="1"/>
<path d="M452.49 485.00 v2.500" stroke="#888" stroke-width="1"/>
<path d="M457.52 485.00 v5.500" stroke="#777" stroke-width="1"/>
<path d="M462.55 485.00 v2.500" stroke="#888" stroke-width="1"/>
<path d="M467.57 485.00 v2.500" stroke="#888" stroke-width="1"/>
<path d="M472.60 485.00 v2.500" stroke="#888" stroke-width="1"/>
<path d="M477.62 485.00 v2.500" stroke="#888" stroke-width="1"/>
<path d="M482.65 485.00 v5.500" stroke="#777" stroke-width="1"/>
<path d="M487.68 485.00 v2.500" stroke="#888" stroke-width="1"/>
<path d="M492.70 485.00 v2.500" stroke="#888" stroke-width="1"/>
<path d="M497.73 485.00 v2.500" stroke="#888" stroke-width="1"/>
<path d="M502.75 485.00 v2.500" stroke="#888" stroke-width="1"/>
<path d="M507.78 485.00 v5.500" stroke="#777" stroke-width="1"/>
<path d="M512.81 485.00 v2.500" stroke="#888" stroke-width="1"/>
<path d="M517.83 485.00 v2.500" stroke="#888" stroke-width="1"/>
<path d="M522.86 485.00 v2.500" stroke="#888" stroke-width="1"/>
<path d="M527.88 485.00 v2.500" stroke="#888" stroke-width="1"/>
<path d="M532.91 485.00 v5.500" stroke="#777" stroke-width="1"/>
<path d="M537.94 485.00 v2.500" stroke="#888" stroke-width="1"/>
<path d="M542.96 485.00 v2.500" stroke="#888" stroke-width="1"/>
<path d="M547.99 485.00 v2.500" stroke="#888" stroke-width="1"/>
<path d="M553.01 485.00 v2.500" stroke="#888" stroke-width="1"/>
<path d="M558.04 485.00 v5.500" stroke="#777" stroke-width="1"/>
<path d="M563.07 485.00 v2.500" stroke="#888" stroke-width="1"/>
<path d="M568.09 485.00 v2.500" stroke="#888" stroke-width="1"/>
<path d="M573.12 485.00 v2.500" stroke="#888" stroke-width="1"/>
<path d="M578.14 485.00 v2.500" stroke="#888" stroke-width="1"/>
<path d="M583.17 485.00 v5.500" stroke="#777" stroke-width="1"/>
<path d="M588.20 485.00 v2.500" stroke="#888" stroke-width="1"/>
<path d="M593.22 485.00 v2.500" stroke="#888" stroke-width="1"/>
<path d="M598.25 485.00 v2.500" stroke="#888" stroke-width="1"/>
<path d="M603.27 485.00 v2.500" stroke="#888" stroke-width="1"/>
<path d="M608.30 485.00 v5.500" stroke="#777" stroke-width="1"/>
<path d="M613.33 485.00 v2.500" stroke="#888" stroke-width="1"/>
<path d="M618.35 485.00 v2.500" stroke="#888" stroke-width="1"/>
<path d="M623.38 485.00 v2.500" stroke="#888" stroke-width="1"/>
<path d="M628.40 485.00 v2.500" stroke="#888" stroke-width="1"/>
<path d="M633.43 485.00 v5.500" stroke="#777" stroke-width="1"/>
<path d="M638.46 485.00 v2.500" stroke="#888" stroke-width="1"/>
<path d="M643.48 485.00 v2.500" stroke="#888" stroke-width="1"/>
<path d="M648.51 485.00 v2.500" stroke="#888" stroke-width="1"/>
<path d="M653.53 485.00 v2.500" stroke="#888" stroke-width="1"/>
<path d="M658.56 485.00 v5.500" stroke="#777" stroke-width="1"/>
<path d="M663.59 485.00 v2.500" stroke="#888" stroke-width="1"/>
<path d="M668.61 485.00 v2.500" stroke="#888" stroke-width="1"/>
<path d="M673.64 485.00 v2.500" stroke="#888" stroke-width="1"/>
<path d="M678.66 485.00 v2.500" stroke="#888" stroke-width="1"/>
<path d="M683.69 485.00 v5.500" stroke="#777" stroke-width="1"/>
<path d="M688.72 485.00 v2.500" stroke="#888" stroke-width="1"/>
<path d="M693.74 485.00 v2.500" stroke="#888" stroke-width="1"/>
<path d="M698.77 485.00 v2.500" stroke="#888" stroke-width="1"/>
<path d="M703.79 485.00 v2.500" stroke="#888" stroke-width="1"/>
<path d="M708.82 485.00 v5.500" stroke="#777" stroke-width="1"/>
<path d="M713.85 485.00 v2.500" stroke="#888" stroke-width="1"/>
<path d="M718.87 485.00 v2.500" stroke="#888" stroke-width="1"/>
<path d="M723.90 485.00 v2.500" stroke="#888" stroke-width="1"/>
<path d="M728.92 485.00 v2.500" stroke="#888" stroke-width="1"/>
<path d="M733.95 485.00 v5.500" stroke="#777" stroke-width="1"/>
<path d="M738.98 485.00 v2.500" stroke="#888" stroke-width="1"/>
<path d="M744.00 485.00 v2.500" stroke="#888" stroke-width="1"/>
<path d="M749.03 485.00 v2.500" stroke="#888" stroke-width="1"/>
<path d="M754.05 485.00 v2.500" stroke="#888" stroke-width="1"/>
<path d="M759.08 485.00 v5.500" stroke="#777" stroke-width="1"/>
<path d="M764.11 485.00 v2.500" stroke="#888" stroke-width="1"/>
<path d="M769.13 485.00 v2.500" stroke="#888" stroke-width="1"/>
<path d="M774.16 485.00 v2.500" stroke="#888" stroke-width="1"/>
<path d="M779.18 485.00 v2.500" stroke="#888" stroke-width="1"/>
<path d="M784.21 485.00 v5.500" stroke="#777" stroke-width="1"/>
<path d="M789.24 485.00 v2.500" stroke="#888" stroke-width="1"/>
<path d="M794.26 485.00 v2.500" stroke="#888" stroke-width="1"/>
<path d="M799.29 485.00 v2.500" stroke="#888" stroke-width="1"/>
<path d="M804.31 485.00 v2.500" stroke="#888" stroke-width="1"/>
<path d="M809.34 485.00 v5.500" stroke="#777" stroke-width="1"/>
<path d="M814.37 485.00 v2.500" stroke="#888" stroke-width="1"/>
<path d="M819.39 485.00 v2.500" stroke="#888" stroke-width="1"/>
<path d="M824.42 485.00 v2.500" stroke="#888" stroke-width="1"/>
<path d="M829.44 485.00 v2.500" stroke="#888" stroke-width="1"/>
<path d="M834.47 485.00 v5.500" stroke="#777" stroke-width="1"/>
<path d="M839.50 485.00 v2.500" stroke="#888" stroke-width="1"/>
<path d="M844.52 485.00 v2.500" stroke="#888" stroke-width="1"/>
<path d="M849.55 485.00 v2.500" stroke="#888" stroke-width="1"/>
<path d="M854.57 485.00 v2.500" stroke="#888" stroke-width="1"/>
<path d="M859.60 485.00 v5.500" stroke="#777" stroke-width="1"/>
<path d="M864.63 485.00 v2.500" stroke="#888" stroke-width="1"/>
<path d="M869.65 485.00 v2.500" stroke="#888" stroke-width="1"/>
<path d="M874.68 485.00 v2.500" stroke="#888" stroke-width="1"/>
<path d="M879.70 485.00 v2.500" stroke="#888" stroke-width="1"/>
<path d="M884.73 485.00 v5.500" stroke="#777" stroke-width="1"/>
<path d="M889.76 485.00 v2.500" stroke="#888" stroke-width="1"/>
<path d="M894.78 485.00 v2.500" stroke="#888" stroke-width="1"/>
<path d="M899.81 485.00 v2.500" stroke="#888" stroke-width="1"/>
<path d="M904.83 485.00 v2.500" stroke="#888" stroke-width="1"/>
<path d="M909.86 485.00 v5.500" stroke="#777" stroke-width="1"/>
<path d="M914.89 485.00 v2.500" stroke="#888" stroke-width="1"/>
<path d="M919.91 485.00 v2.500" stroke="#888" stroke-width="1"/>
<path d="M924.94 485.00 v2.500" stroke="#888" stroke-width="1"/>
<path d="M929.96 485.00 v2.500" stroke="#888" stroke-width="1"/>
<path d="M934.99 485.00 v5.500" stroke="#777" stroke-width="1"/>
<path d="M940.02 485.00 v2.500" stroke="#888" stroke-width="1"/>
<path d="M945.04 485.00 v2.500" stroke="#888" stroke-width="1"/>
<path d="M950.07 485.00 v2.500" stroke="#888" stroke-width="1"/>
<path d="M955.09 485.00 v2.500" stroke="#888" stroke-width="1"/>
<path d="M960.12 485.00 v5.500" stroke="#777" stroke-width="1"/>
<path d="M965.15 485.00 v2.500" stroke="#888" stroke-width="1"/>
<path d="M970.17 485.00 v2.500" stroke="#888" stroke-width="1"/>
<path d="M975.20 485.00 v2.500" stroke="#888" stroke-width="1"/>
<path d="M980.22 485.00 v2.500" stroke="#888" stroke-width="1"/>
<path d="M985.25 485.00 v5.500" stroke="#777" stroke-width="1"/>
<path d="M990.28 485.00 v2.500" stroke="#888" stroke-width="1"/>
<path d="M995.30 485.00 v2.500" stroke="#888" stroke-width="1"/>
<path d="M1000.33 485.00 v2.500" stroke="#888" stroke-width="1"/>
<path d="M1005.35 485.00 v2.500" stroke="#888" stroke-width="1"/>
<path d="M1010.38 485.00 v5.500" stroke="#777" stroke-width="1"/>
<path d="M1015.41 485.00 v2.500" stroke="#888" stroke-width="1"/>
<path d="M1020.43 485.00 v2.500" stroke="#888" stroke-width="1"/>
<path d="M1025.46 485.00 v2.500" stroke="#888" stroke-width="1"/>
<path d="M1030.48 485.00 v2.500" stroke="#888" stroke-width="1"/>
<path d="M1035.51 485.00 v5.500" stroke="#777" stroke-width="1"/>
<path d="M1040.54 485.00 v2.500" stroke="#888" stroke-width="1"/>
<path d="M1045.56 485.00 v2.500" stroke="#888" stroke-width="1"/>
<path d="M1050.59 485.00 v2.500" stroke="#888" stroke-width="1"/>
<path d="M1055.61 485.00 v2.500" stroke="#888" stroke-width="1"/>
<path d="M1060.64 485.00 v5.500" stroke="#777" stroke-width="1"/>
<path d="M1065.67 485.00 v2.500" stroke="#888" stroke-width="1"/>
<path d="M1070.69 485.00 v2.500" stroke="#888" stroke-width="1"/>
<path d="M1075.72 485.00 v2.500" stroke="#888" stroke-width="1"/>
<path d="M1080.74 485.00 v2.500" stroke="#888" stroke-width="1"/>
<path d="M1085.77 485.00 v5.500" stroke="#777" stroke-width="1"/>
<path d="M1090.80 485.00 v2.500" stroke="#888" stroke-width="1"/>
<path d="M1095.82 485.00 v2.500" stroke="#888" stroke-width="1"/>
<path d="M1100.85 485.00 v2.500" stroke="#888" stroke-width="1"/>
<path d="M1105.87 485.00 v2.500" stroke="#888" stroke-width="1"/>
<path d="M1110.90 485.00 v5.500" stroke="#777" stroke-width="1"/>
<path d="M1115.93 485.00 v2.500" stroke="#888" stroke-width="1"/>
<path d="M1120.95 485.00 v2.500" stroke="#888" stroke-width="1"/>
<path d="M1125.98 485.00 v2.500" stroke="#888" stroke-width="1"/>
<path d="M359.60 320.00 L365.10 315.00 H367.50 V475.50 L362.00 480.50 H359.60 Z" fill="#030378" stroke="#04040c" stroke-width=".9" stroke-linejoin="round"/>
<path d="M359.60 320.00 L365.10 315.00 H367.50 L362.00 320.00 Z" fill="#00002a"/>
<rect x="359.90" y="320.50" width="1.90" height="159.80" fill="#04047c"/>
<path d="M365.20 340.00 L370.70 335.00 H373.10 V475.50 L367.60 480.50 H365.20 Z" fill="#185420" stroke="#04040c" stroke-width=".9" stroke-linejoin="round"/>
<path d="M365.20 340.00 L370.70 335.00 H373.10 L367.60 340.00 Z" fill="#062a0a"/>
<rect x="365.90" y="340.50" width="1.50" height="139.80" fill="#3a963a"/>
<path d="M369.30 461.25 L374.80 456.25 H377.20 V475.50 L371.70 480.50 H369.30 Z" fill="#761212" stroke="#04040c" stroke-width=".9" stroke-linejoin="round"/>
<path d="M369.30 461.25 L374.80 456.25 H377.20 L371.70 461.25 Z" fill="#3a0808"/>
<rect x="369.60" y="461.75" width="1.90" height="18.55" fill="#9a3020"/>
<path d="M384.77 168.75 L390.27 163.75 H392.67 V475.50 L387.17 480.50 H384.77 Z" fill="#030378" stroke="#04040c" stroke-width=".9" stroke-linejoin="round"/>
<path d="M384.77 168.75 L390.27 163.75 H392.67 L387.17 168.75 Z" fill="#00002a"/>
<rect x="385.07" y="169.25" width="1.90" height="311.05" fill="#04047c"/>
<path d="M390.37 198.00 L395.87 193.00 H398.27 V475.50 L392.77 480.50 H390.37 Z" fill="#185420" stroke="#04040c" stroke-width=".9" stroke-linejoin="round"/>
<path d="M390.37 198.00 L395.87 193.00 H398.27 L392.77 198.00 Z" fill="#062a0a"/>
<rect x="391.07" y="198.50" width="1.50" height="281.80" fill="#3a963a"/>
<path d="M394.47 451.75 L399.97 446.75 H402.37 V475.50 L396.87 480.50 H394.47 Z" fill="#761212" stroke="#04040c" stroke-width=".9" stroke-linejoin="round"/>
<path d="M394.47 451.75 L399.97 446.75 H402.37 L396.87 451.75 Z" fill="#3a0808"/>
<rect x="394.77" y="452.25" width="1.90" height="28.05" fill="#9a3020"/>
<path d="M409.94 235.75 L415.44 230.75 H417.84 V475.50 L412.34 480.50 H409.94 Z" fill="#030378" stroke="#04040c" stroke-width=".9" stroke-linejoin="round"/>
<path d="M409.94 235.75 L415.44 230.75 H417.84 L412.34 235.75 Z" fill="#00002a"/>
<rect x="410.24" y="236.25" width="1.90" height="244.05" fill="#04047c"/>
<path d="M415.54 266.25 L421.04 261.25 H423.44 V475.50 L417.94 480.50 H415.54 Z" fill="#185420" stroke="#04040c" stroke-width=".9" stroke-linejoin="round"/>
<path d="M415.54 266.25 L421.04 261.25 H423.44 L417.94 266.25 Z" fill="#062a0a"/>
<rect x="416.24" y="266.75" width="1.50" height="213.55" fill="#3a963a"/>
<path d="M419.64 450.75 L425.14 445.75 H427.54 V475.50 L422.04 480.50 H419.64 Z" fill="#761212" stroke="#04040c" stroke-width=".9" stroke-linejoin="round"/>
<path d="M419.64 450.75 L425.14 445.75 H427.54 L422.04 450.75 Z" fill="#3a0808"/>
<rect x="419.94" y="451.25" width="1.90" height="29.05" fill="#9a3020"/>
<path d="M435.11 260.00 L440.61 255.00 H443.01 V475.50 L437.51 480.50 H435.11 Z" fill="#030378" stroke="#04040c" stroke-width=".9" stroke-linejoin="round"/>
<path d="M435.11 260.00 L440.61 255.00 H443.01 L437.51 260.00 Z" fill="#00002a"/>
<rect x="435.41" y="260.50" width="1.90" height="219.80" fill="#04047c"/>
<path d="M440.71 284.25 L446.21 279.25 H448.61 V475.50 L443.11 480.50 H440.71 Z" fill="#185420" stroke="#04040c" stroke-width=".9" stroke-linejoin="round"/>
<path d="M440.71 284.25 L446.21 279.25 H448.61 L443.11 284.25 Z" fill="#062a0a"/>
<rect x="441.41" y="284.75" width="1.50" height="195.55" fill="#3a963a"/>
<path d="M444.81 456.25 L450.31 451.25 H452.71 V475.50 L447.21 480.50 H444.81 Z" fill="#761212" stroke="#04040c" stroke-width=".9" stroke-linejoin="round"/>
<path d="M444.81 456.25 L450.31 451.25 H452.71 L447.21 456.25 Z" fill="#3a0808"/>
<rect x="445.11" y="456.75" width="1.90" height="23.55" fill="#9a3020"/>
<path d="M460.28 358.00 L465.78 353.00 H468.18 V475.50 L462.68 480.50 H460.28 Z" fill="#030378" stroke="#04040c" stroke-width=".9" stroke-linejoin="round"/>
<path d="M460.28 358.00 L465.78 353.00 H468.18 L462.68 358.00 Z" fill="#00002a"/>
<rect x="460.58" y="358.50" width="1.90" height="121.80" fill="#04047c"/>
<path d="M465.88 380.50 L471.38 375.50 H473.78 V475.50 L468.28 480.50 H465.88 Z" fill="#185420" stroke="#04040c" stroke-width=".9" stroke-linejoin="round"/>
<path d="M465.88 380.50 L471.38 375.50 H473.78 L468.28 380.50 Z" fill="#062a0a"/>
<rect x="466.58" y="381.00" width="1.50" height="99.30" fill="#3a963a"/>
<path d="M469.98 458.75 L475.48 453.75 H477.88 V475.50 L472.38 480.50 H469.98 Z" fill="#761212" stroke="#04040c" stroke-width=".9" stroke-linejoin="round"/>
<path d="M469.98 458.75 L475.48 453.75 H477.88 L472.38 458.75 Z" fill="#3a0808"/>
<rect x="470.28" y="459.25" width="1.90" height="21.05" fill="#9a3020"/>
<path d="M485.45 287.50 L490.95 282.50 H493.35 V475.50 L487.85 480.50 H485.45 Z" fill="#030378" stroke="#04040c" stroke-width=".9" stroke-linejoin="round"/>
<path d="M485.45 287.50 L490.95 282.50 H493.35 L487.85 287.50 Z" fill="#00002a"/>
<rect x="485.75" y="288.00" width="1.90" height="192.30" fill="#04047c"/>
<path d="M491.05 321.50 L496.55 316.50 H498.95 V475.50 L493.45 480.50 H491.05 Z" fill="#185420" stroke="#04040c" stroke-width=".9" stroke-linejoin="round"/>
<path d="M491.05 321.50 L496.55 316.50 H498.95 L493.45 321.50 Z" fill="#062a0a"/>
<rect x="491.75" y="322.00" width="1.50" height="158.30" fill="#3a963a"/>
<path d="M495.15 447.50 L500.65 442.50 H503.05 V475.50 L497.55 480.50 H495.15 Z" fill="#761212" stroke="#04040c" stroke-width=".9" stroke-linejoin="round"/>
<path d="M495.15 447.50 L500.65 442.50 H503.05 L497.55 447.50 Z" fill="#3a0808"/>
<rect x="495.45" y="448.00" width="1.90" height="32.30" fill="#9a3020"/>
<path d="M510.62 387.00 L516.12 382.00 H518.52 V475.50 L513.02 480.50 H510.62 Z" fill="#030378" stroke="#04040c" stroke-width=".9" stroke-linejoin="round"/>
<path d="M510.62 387.00 L516.12 382.00 H518.52 L513.02 387.00 Z" fill="#00002a"/>
<rect x="510.92" y="387.50" width="1.90" height="92.80" fill="#04047c"/>
<path d="M516.22 411.25 L521.72 406.25 H524.12 V475.50 L518.62 480.50 H516.22 Z" fill="#185420" stroke="#04040c" stroke-width=".9" stroke-linejoin="round"/>
<path d="M516.22 411.25 L521.72 406.25 H524.12 L518.62 411.25 Z" fill="#062a0a"/>
<rect x="516.92" y="411.75" width="1.50" height="68.55" fill="#3a963a"/>
<path d="M520.32 456.75 L525.82 451.75 H528.22 V475.50 L522.72 480.50 H520.32 Z" fill="#761212" stroke="#04040c" stroke-width=".9" stroke-linejoin="round"/>
<path d="M520.32 456.75 L525.82 451.75 H528.22 L522.72 456.75 Z" fill="#3a0808"/>
<rect x="520.62" y="457.25" width="1.90" height="23.05" fill="#9a3020"/>
<path d="M535.79 340.00 L541.29 335.00 H543.69 V475.50 L538.19 480.50 H535.79 Z" fill="#030378" stroke="#04040c" stroke-width=".9" stroke-linejoin="round"/>
<path d="M535.79 340.00 L541.29 335.00 H543.69 L538.19 340.00 Z" fill="#00002a"/>
<rect x="536.09" y="340.50" width="1.90" height="139.80" fill="#04047c"/>
<path d="M541.39 372.50 L546.89 367.50 H549.29 V475.50 L543.79 480.50 H541.39 Z" fill="#185420" stroke="#04040c" stroke-width=".9" stroke-linejoin="round"/>
<path d="M541.39 372.50 L546.89 367.50 H549.29 L543.79 372.50 Z" fill="#062a0a"/>
<rect x="542.09" y="373.00" width="1.50" height="107.30" fill="#3a963a"/>
<path d="M545.49 447.50 L550.99 442.50 H553.39 V475.50 L547.89 480.50 H545.49 Z" fill="#761212" stroke="#04040c" stroke-width=".9" stroke-linejoin="round"/>
<path d="M545.49 447.50 L550.99 442.50 H553.39 L547.89 447.50 Z" fill="#3a0808"/>
<rect x="545.79" y="448.00" width="1.90" height="32.30" fill="#9a3020"/>
<path d="M560.96 234.50 L566.46 229.50 H568.86 V475.50 L563.36 480.50 H560.96 Z" fill="#030378" stroke="#04040c" stroke-width=".9" stroke-linejoin="round"/>
<path d="M560.96 234.50 L566.46 229.50 H568.86 L563.36 234.50 Z" fill="#00002a"/>
<rect x="561.26" y="235.00" width="1.90" height="245.30" fill="#04047c"/>
<path d="M566.56 273.25 L572.06 268.25 H574.46 V475.50 L568.96 480.50 H566.56 Z" fill="#185420" stroke="#04040c" stroke-width=".9" stroke-linejoin="round"/>
<path d="M566.56 273.25 L572.06 268.25 H574.46 L568.96 273.25 Z" fill="#062a0a"/>
<rect x="567.26" y="273.75" width="1.50" height="206.55" fill="#3a963a"/>
<path d="M570.66 442.50 L576.16 437.50 H578.56 V475.50 L573.06 480.50 H570.66 Z" fill="#761212" stroke="#04040c" stroke-width=".9" stroke-linejoin="round"/>
<path d="M570.66 442.50 L576.16 437.50 H578.56 L573.06 442.50 Z" fill="#3a0808"/>
<rect x="570.96" y="443.00" width="1.90" height="37.30" fill="#9a3020"/>
<path d="M586.13 387.00 L591.63 382.00 H594.03 V475.50 L588.53 480.50 H586.13 Z" fill="#030378" stroke="#04040c" stroke-width=".9" stroke-linejoin="round"/>
<path d="M586.13 387.00 L591.63 382.00 H594.03 L588.53 387.00 Z" fill="#00002a"/>
<rect x="586.43" y="387.50" width="1.90" height="92.80" fill="#04047c"/>
<path d="M591.73 418.25 L597.23 413.25 H599.63 V475.50 L594.13 480.50 H591.73 Z" fill="#185420" stroke="#04040c" stroke-width=".9" stroke-linejoin="round"/>
<path d="M591.73 418.25 L597.23 413.25 H599.63 L594.13 418.25 Z" fill="#062a0a"/>
<rect x="592.43" y="418.75" width="1.50" height="61.55" fill="#3a963a"/>
<path d="M595.83 449.50 L601.33 444.50 H603.73 V475.50 L598.23 480.50 H595.83 Z" fill="#761212" stroke="#04040c" stroke-width=".9" stroke-linejoin="round"/>
<path d="M595.83 449.50 L601.33 444.50 H603.73 L598.23 449.50 Z" fill="#3a0808"/>
<rect x="596.13" y="450.00" width="1.90" height="30.30" fill="#9a3020"/>
<path d="M611.30 366.25 L616.80 361.25 H619.20 V475.50 L613.70 480.50 H611.30 Z" fill="#030378" stroke="#04040c" stroke-width=".9" stroke-linejoin="round"/>
<path d="M611.30 366.25 L616.80 361.25 H619.20 L613.70 366.25 Z" fill="#00002a"/>
<rect x="611.60" y="366.75" width="1.90" height="113.55" fill="#04047c"/>
<path d="M616.90 401.25 L622.40 396.25 H624.80 V475.50 L619.30 480.50 H616.90 Z" fill="#185420" stroke="#04040c" stroke-width=".9" stroke-linejoin="round"/>
<path d="M616.90 401.25 L622.40 396.25 H624.80 L619.30 401.25 Z" fill="#062a0a"/>
<rect x="617.60" y="401.75" width="1.50" height="78.55" fill="#3a963a"/>
<path d="M621.00 446.00 L626.50 441.00 H628.90 V475.50 L623.40 480.50 H621.00 Z" fill="#761212" stroke="#04040c" stroke-width=".9" stroke-linejoin="round"/>
<path d="M621.00 446.00 L626.50 441.00 H628.90 L623.40 446.00 Z" fill="#3a0808"/>
<rect x="621.30" y="446.50" width="1.90" height="33.80" fill="#9a3020"/>
<path d="M636.47 309.50 L641.97 304.50 H644.37 V475.50 L638.87 480.50 H636.47 Z" fill="#030378" stroke="#04040c" stroke-width=".9" stroke-linejoin="round"/>
<path d="M636.47 309.50 L641.97 304.50 H644.37 L638.87 309.50 Z" fill="#00002a"/>
<rect x="636.77" y="310.00" width="1.90" height="170.30" fill="#04047c"/>
<path d="M642.07 341.25 L647.57 336.25 H649.97 V475.50 L644.47 480.50 H642.07 Z" fill="#185420" stroke="#04040c" stroke-width=".9" stroke-linejoin="round"/>
<path d="M642.07 341.25 L647.57 336.25 H649.97 L644.47 341.25 Z" fill="#062a0a"/>
<rect x="642.77" y="341.75" width="1.50" height="138.55" fill="#3a963a"/>
<path d="M646.17 448.25 L651.67 443.25 H654.07 V475.50 L648.57 480.50 H646.17 Z" fill="#761212" stroke="#04040c" stroke-width=".9" stroke-linejoin="round"/>
<path d="M646.17 448.25 L651.67 443.25 H654.07 L648.57 448.25 Z" fill="#3a0808"/>
<rect x="646.47" y="448.75" width="1.90" height="31.55" fill="#9a3020"/>
<path d="M661.64 195.50 L667.14 190.50 H669.54 V475.50 L664.04 480.50 H661.64 Z" fill="#030378" stroke="#04040c" stroke-width=".9" stroke-linejoin="round"/>
<path d="M661.64 195.50 L667.14 190.50 H669.54 L664.04 195.50 Z" fill="#00002a"/>
<rect x="661.94" y="196.00" width="1.90" height="284.30" fill="#04047c"/>
<path d="M667.24 237.00 L672.74 232.00 H675.14 V475.50 L669.64 480.50 H667.24 Z" fill="#185420" stroke="#04040c" stroke-width=".9" stroke-linejoin="round"/>
<path d="M667.24 237.00 L672.74 232.00 H675.14 L669.64 237.00 Z" fill="#062a0a"/>
<rect x="667.94" y="237.50" width="1.50" height="242.80" fill="#3a963a"/>
<path d="M671.34 440.50 L676.84 435.50 H679.24 V475.50 L673.74 480.50 H671.34 Z" fill="#761212" stroke="#04040c" stroke-width=".9" stroke-linejoin="round"/>
<path d="M671.34 440.50 L676.84 435.50 H679.24 L673.74 440.50 Z" fill="#3a0808"/>
<rect x="671.64" y="441.00" width="1.90" height="39.30" fill="#9a3020"/>
<path d="M686.81 277.50 L692.31 272.50 H694.71 V475.50 L689.21 480.50 H686.81 Z" fill="#030378" stroke="#04040c" stroke-width=".9" stroke-linejoin="round"/>
<path d="M686.81 277.50 L692.31 272.50 H694.71 L689.21 277.50 Z" fill="#00002a"/>
<rect x="687.11" y="278.00" width="1.90" height="202.30" fill="#04047c"/>
<path d="M692.41 303.00 L697.91 298.00 H700.31 V475.50 L694.81 480.50 H692.41 Z" fill="#185420" stroke="#04040c" stroke-width=".9" stroke-linejoin="round"/>
<path d="M692.41 303.00 L697.91 298.00 H700.31 L694.81 303.00 Z" fill="#062a0a"/>
<rect x="693.11" y="303.50" width="1.50" height="176.80" fill="#3a963a"/>
<path d="M696.51 455.50 L702.01 450.50 H704.41 V475.50 L698.91 480.50 H696.51 Z" fill="#761212" stroke="#04040c" stroke-width=".9" stroke-linejoin="round"/>
<path d="M696.51 455.50 L702.01 450.50 H704.41 L698.91 455.50 Z" fill="#3a0808"/>
<rect x="696.81" y="456.00" width="1.90" height="24.30" fill="#9a3020"/>
<path d="M711.98 392.50 L717.48 387.50 H719.88 V475.50 L714.38 480.50 H711.98 Z" fill="#030378" stroke="#04040c" stroke-width=".9" stroke-linejoin="round"/>
<path d="M711.98 392.50 L717.48 387.50 H719.88 L714.38 392.50 Z" fill="#00002a"/>
<rect x="712.28" y="393.00" width="1.90" height="87.30" fill="#04047c"/>
<path d="M717.58 420.75 L723.08 415.75 H725.48 V475.50 L719.98 480.50 H717.58 Z" fill="#185420" stroke="#04040c" stroke-width=".9" stroke-linejoin="round"/>
<path d="M717.58 420.75 L723.08 415.75 H725.48 L719.98 420.75 Z" fill="#062a0a"/>
<rect x="718.28" y="421.25" width="1.50" height="59.05" fill="#3a963a"/>
<path d="M721.68 455.50 L727.18 450.50 H729.58 V475.50 L724.08 480.50 H721.68 Z" fill="#761212" stroke="#04040c" stroke-width=".9" stroke-linejoin="round"/>
<path d="M721.68 455.50 L727.18 450.50 H729.58 L724.08 455.50 Z" fill="#3a0808"/>
<rect x="721.98" y="456.00" width="1.90" height="24.30" fill="#9a3020"/>
<path d="M737.15 285.50 L742.65 280.50 H745.05 V475.50 L739.55 480.50 H737.15 Z" fill="#030378" stroke="#04040c" stroke-width=".9" stroke-linejoin="round"/>
<path d="M737.15 285.50 L742.65 280.50 H745.05 L739.55 285.50 Z" fill="#00002a"/>
<rect x="737.45" y="286.00" width="1.90" height="194.30" fill="#04047c"/>
<path d="M742.75 316.75 L748.25 311.75 H750.65 V475.50 L745.15 480.50 H742.75 Z" fill="#185420" stroke="#04040c" stroke-width=".9" stroke-linejoin="round"/>
<path d="M742.75 316.75 L748.25 311.75 H750.65 L745.15 316.75 Z" fill="#062a0a"/>
<rect x="743.45" y="317.25" width="1.50" height="163.05" fill="#3a963a"/>
<path d="M746.85 449.50 L752.35 444.50 H754.75 V475.50 L749.25 480.50 H746.85 Z" fill="#761212" stroke="#04040c" stroke-width=".9" stroke-linejoin="round"/>
<path d="M746.85 449.50 L752.35 444.50 H754.75 L749.25 449.50 Z" fill="#3a0808"/>
<rect x="747.15" y="450.00" width="1.90" height="30.30" fill="#9a3020"/>
<path d="M762.32 273.00 L767.82 268.00 H770.22 V475.50 L764.72 480.50 H762.32 Z" fill="#030378" stroke="#04040c" stroke-width=".9" stroke-linejoin="round"/>
<path d="M762.32 273.00 L767.82 268.00 H770.22 L764.72 273.00 Z" fill="#00002a"/>
<rect x="762.62" y="273.50" width="1.90" height="206.80" fill="#04047c"/>
<path d="M767.92 292.50 L773.42 287.50 H775.82 V475.50 L770.32 480.50 H767.92 Z" fill="#185420" stroke="#04040c" stroke-width=".9" stroke-linejoin="round"/>
<path d="M767.92 292.50 L773.42 287.50 H775.82 L770.32 292.50 Z" fill="#062a0a"/>
<rect x="768.62" y="293.00" width="1.50" height="187.30" fill="#3a963a"/>
<path d="M772.02 461.25 L777.52 456.25 H779.92 V475.50 L774.42 480.50 H772.02 Z" fill="#761212" stroke="#04040c" stroke-width=".9" stroke-linejoin="round"/>
<path d="M772.02 461.25 L777.52 456.25 H779.92 L774.42 461.25 Z" fill="#3a0808"/>
<rect x="772.32" y="461.75" width="1.90" height="18.55" fill="#9a3020"/>
<path d="M787.49 284.25 L792.99 279.25 H795.39 V475.50 L789.89 480.50 H787.49 Z" fill="#030378" stroke="#04040c" stroke-width=".9" stroke-linejoin="round"/>
<path d="M787.49 284.25 L792.99 279.25 H795.39 L789.89 284.25 Z" fill="#00002a"/>
<rect x="787.79" y="284.75" width="1.90" height="195.55" fill="#04047c"/>
<path d="M793.09 315.50 L798.59 310.50 H800.99 V475.50 L795.49 480.50 H793.09 Z" fill="#185420" stroke="#04040c" stroke-width=".9" stroke-linejoin="round"/>
<path d="M793.09 315.50 L798.59 310.50 H800.99 L795.49 315.50 Z" fill="#062a0a"/>
<rect x="793.79" y="316.00" width="1.50" height="164.30" fill="#3a963a"/>
<path d="M797.19 449.50 L802.69 444.50 H805.09 V475.50 L799.59 480.50 H797.19 Z" fill="#761212" stroke="#04040c" stroke-width=".9" stroke-linejoin="round"/>
<path d="M797.19 449.50 L802.69 444.50 H805.09 L799.59 449.50 Z" fill="#3a0808"/>
<rect x="797.49" y="450.00" width="1.90" height="30.30" fill="#9a3020"/>
<path d="M812.66 351.25 L818.16 346.25 H820.56 V475.50 L815.06 480.50 H812.66 Z" fill="#030378" stroke="#04040c" stroke-width=".9" stroke-linejoin="round"/>
<path d="M812.66 351.25 L818.16 346.25 H820.56 L815.06 351.25 Z" fill="#00002a"/>
<rect x="812.96" y="351.75" width="1.90" height="128.55" fill="#04047c"/>
<path d="M818.26 378.00 L823.76 373.00 H826.16 V475.50 L820.66 480.50 H818.26 Z" fill="#185420" stroke="#04040c" stroke-width=".9" stroke-linejoin="round"/>
<path d="M818.26 378.00 L823.76 373.00 H826.16 L820.66 378.00 Z" fill="#062a0a"/>
<rect x="818.96" y="378.50" width="1.50" height="101.80" fill="#3a963a"/>
<path d="M822.36 454.50 L827.86 449.50 H830.26 V475.50 L824.76 480.50 H822.36 Z" fill="#761212" stroke="#04040c" stroke-width=".9" stroke-linejoin="round"/>
<path d="M822.36 454.50 L827.86 449.50 H830.26 L824.76 454.50 Z" fill="#3a0808"/>
<rect x="822.66" y="455.00" width="1.90" height="25.30" fill="#9a3020"/>
<path d="M837.83 341.25 L843.33 336.25 H845.73 V475.50 L840.23 480.50 H837.83 Z" fill="#030378" stroke="#04040c" stroke-width=".9" stroke-linejoin="round"/>
<path d="M837.83 341.25 L843.33 336.25 H845.73 L840.23 341.25 Z" fill="#00002a"/>
<rect x="838.13" y="341.75" width="1.90" height="138.55" fill="#04047c"/>
<path d="M843.43 357.50 L848.93 352.50 H851.33 V475.50 L845.83 480.50 H843.43 Z" fill="#185420" stroke="#04040c" stroke-width=".9" stroke-linejoin="round"/>
<path d="M843.43 357.50 L848.93 352.50 H851.33 L845.83 357.50 Z" fill="#062a0a"/>
<rect x="844.13" y="358.00" width="1.50" height="122.30" fill="#3a963a"/>
<path d="M847.53 464.50 L853.03 459.50 H855.43 V475.50 L849.93 480.50 H847.53 Z" fill="#761212" stroke="#04040c" stroke-width=".9" stroke-linejoin="round"/>
<path d="M847.53 464.50 L853.03 459.50 H855.43 L849.93 464.50 Z" fill="#3a0808"/>
<rect x="847.83" y="465.00" width="1.90" height="15.30" fill="#9a3020"/>
<path d="M863.00 360.75 L868.50 355.75 H870.90 V475.50 L865.40 480.50 H863.00 Z" fill="#030378" stroke="#04040c" stroke-width=".9" stroke-linejoin="round"/>
<path d="M863.00 360.75 L868.50 355.75 H870.90 L865.40 360.75 Z" fill="#00002a"/>
<rect x="863.30" y="361.25" width="1.90" height="119.05" fill="#04047c"/>
<path d="M868.60 402.50 L874.10 397.50 H876.50 V475.50 L871.00 480.50 H868.60 Z" fill="#185420" stroke="#04040c" stroke-width=".9" stroke-linejoin="round"/>
<path d="M868.60 402.50 L874.10 397.50 H876.50 L871.00 402.50 Z" fill="#062a0a"/>
<rect x="869.30" y="403.00" width="1.50" height="77.30" fill="#3a963a"/>
<path d="M872.70 439.50 L878.20 434.50 H880.60 V475.50 L875.10 480.50 H872.70 Z" fill="#761212" stroke="#04040c" stroke-width=".9" stroke-linejoin="round"/>
<path d="M872.70 439.50 L878.20 434.50 H880.60 L875.10 439.50 Z" fill="#3a0808"/>
<rect x="873.00" y="440.00" width="1.90" height="40.30" fill="#9a3020"/>
<path d="M888.17 417.50 L893.67 412.50 H896.07 V475.50 L890.57 480.50 H888.17 Z" fill="#030378" stroke="#04040c" stroke-width=".9" stroke-linejoin="round"/>
<path d="M888.17 417.50 L893.67 412.50 H896.07 L890.57 417.50 Z" fill="#00002a"/>
<rect x="888.47" y="418.00" width="1.90" height="62.30" fill="#04047c"/>
<path d="M893.77 436.25 L899.27 431.25 H901.67 V475.50 L896.17 480.50 H893.77 Z" fill="#185420" stroke="#04040c" stroke-width=".9" stroke-linejoin="round"/>
<path d="M893.77 436.25 L899.27 431.25 H901.67 L896.17 436.25 Z" fill="#062a0a"/>
<rect x="894.47" y="436.75" width="1.50" height="43.55" fill="#3a963a"/>
<path d="M897.87 462.50 L903.37 457.50 H905.77 V475.50 L900.27 480.50 H897.87 Z" fill="#761212" stroke="#04040c" stroke-width=".9" stroke-linejoin="round"/>
<path d="M897.87 462.50 L903.37 457.50 H905.77 L900.27 462.50 Z" fill="#3a0808"/>
<rect x="898.17" y="463.00" width="1.90" height="17.30" fill="#9a3020"/>
<path d="M913.34 419.50 L918.84 414.50 H921.24 V475.50 L915.74 480.50 H913.34 Z" fill="#030378" stroke="#04040c" stroke-width=".9" stroke-linejoin="round"/>
<path d="M913.34 419.50 L918.84 414.50 H921.24 L915.74 419.50 Z" fill="#00002a"/>
<rect x="913.64" y="420.00" width="1.90" height="60.30" fill="#04047c"/>
<path d="M918.94 432.50 L924.44 427.50 H926.84 V475.50 L921.34 480.50 H918.94 Z" fill="#185420" stroke="#04040c" stroke-width=".9" stroke-linejoin="round"/>
<path d="M918.94 432.50 L924.44 427.50 H926.84 L921.34 432.50 Z" fill="#062a0a"/>
<rect x="919.64" y="433.00" width="1.50" height="47.30" fill="#3a963a"/>
<path d="M923.04 468.25 L928.54 463.25 H930.94 V475.50 L925.44 480.50 H923.04 Z" fill="#761212" stroke="#04040c" stroke-width=".9" stroke-linejoin="round"/>
<path d="M923.04 468.25 L928.54 463.25 H930.94 L925.44 468.25 Z" fill="#3a0808"/>
<rect x="923.34" y="468.75" width="1.90" height="11.55" fill="#9a3020"/>
<path d="M937.71 481.2 L943.71 475.4 h3.0 L940.71 481.2 Z" fill="#0a0a3c"/>
<path d="M942.91 481.2 L948.91 475.4 h2.0 L944.91 481.2 Z" fill="#0a0a3c"/>
<path d="M946.51 481.2 L952.51 475.4 h2.2 L948.71 481.2 Z" fill="#0a0a3c"/>
<path d="M962.88 481.2 L968.88 475.4 h3.0 L965.88 481.2 Z" fill="#0a0a3c"/>
<path d="M968.08 481.2 L974.08 475.4 h2.0 L970.08 481.2 Z" fill="#0a0a3c"/>
<path d="M971.68 481.2 L977.68 475.4 h2.2 L973.88 481.2 Z" fill="#0a0a3c"/>
<path d="M988.05 481.2 L994.05 475.4 h3.0 L991.05 481.2 Z" fill="#0a0a3c"/>
<path d="M993.25 481.2 L999.25 475.4 h2.0 L995.25 481.2 Z" fill="#0a0a3c"/>
<path d="M996.85 481.2 L1002.85 475.4 h2.2 L999.05 481.2 Z" fill="#0a0a3c"/>
<path d="M1013.22 481.2 L1019.22 475.4 h3.0 L1016.22 481.2 Z" fill="#0a0a3c"/>
<path d="M1018.42 481.2 L1024.42 475.4 h2.0 L1020.42 481.2 Z" fill="#0a0a3c"/>
<path d="M1022.02 481.2 L1028.02 475.4 h2.2 L1024.22 481.2 Z" fill="#0a0a3c"/>
<path d="M1038.39 481.2 L1044.39 475.4 h3.0 L1041.39 481.2 Z" fill="#0a0a3c"/>
<path d="M1043.59 481.2 L1049.59 475.4 h2.0 L1045.59 481.2 Z" fill="#0a0a3c"/>
<path d="M1047.19 481.2 L1053.19 475.4 h2.2 L1049.39 481.2 Z" fill="#0a0a3c"/>
<path d="M1063.56 481.2 L1069.56 475.4 h3.0 L1066.56 481.2 Z" fill="#0a0a3c"/>
<path d="M1068.76 481.2 L1074.76 475.4 h2.0 L1070.76 481.2 Z" fill="#0a0a3c"/>
<path d="M1072.36 481.2 L1078.36 475.4 h2.2 L1074.56 481.2 Z" fill="#0a0a3c"/>
<path d="M1088.73 481.2 L1094.73 475.4 h3.0 L1091.73 481.2 Z" fill="#0a0a3c"/>
<path d="M1093.93 481.2 L1099.93 475.4 h2.0 L1095.93 481.2 Z" fill="#0a0a3c"/>
<path d="M1097.53 481.2 L1103.53 475.4 h2.2 L1099.73 481.2 Z" fill="#0a0a3c"/>
<path d="M1113.90 481.2 L1119.90 475.4 h3.0 L1116.90 481.2 Z" fill="#0a0a3c"/>
<path d="M1119.10 481.2 L1125.10 475.4 h2.0 L1121.10 481.2 Z" fill="#0a0a3c"/>
<path d="M1122.70 481.2 L1128.70 475.4 h2.2 L1124.90 481.2 Z" fill="#0a0a3c"/>
</svg>
<span class="t" style="left:334.00px;top:478.20px;font-size:13px;color:#000;transform:scaleX(0.9676);">0</span>
<span class="t" style="left:327.40px;top:455.95px;font-size:13px;color:#000;transform:scaleX(0.9400);">20</span>
<span class="t" style="left:327.40px;top:433.70px;font-size:13px;color:#000;transform:scaleX(0.9400);">40</span>
<span class="t" style="left:327.40px;top:411.45px;font-size:13px;color:#000;transform:scaleX(0.9400);">60</span>
<span class="t" style="left:327.40px;top:389.20px;font-size:13px;color:#000;transform:scaleX(0.9400);">80</span>
<span class="t" style="left:320.60px;top:366.95px;font-size:13px;color:#000;transform:scaleX(0.9400);">100</span>
<span class="t" style="left:320.60px;top:344.70px;font-size:13px;color:#000;transform:scaleX(0.9400);">120</span>
<span class="t" style="left:320.60px;top:322.45px;font-size:13px;color:#000;transform:scaleX(0.9400);">140</span>
<span class="t" style="left:320.60px;top:300.20px;font-size:13px;color:#000;transform:scaleX(0.9400);">160</span>
<span class="t" style="left:320.60px;top:277.95px;font-size:13px;color:#000;transform:scaleX(0.9400);">180</span>
<span class="t" style="left:320.60px;top:255.70px;font-size:13px;color:#000;transform:scaleX(0.9400);">200</span>
<span class="t" style="left:320.60px;top:233.45px;font-size:13px;color:#000;transform:scaleX(0.9400);">220</span>
<span class="t" style="left:320.60px;top:211.20px;font-size:13px;color:#000;transform:scaleX(0.9400);">240</span>
<span class="t" style="left:320.60px;top:188.95px;font-size:13px;color:#000;transform:scaleX(0.9400);">260</span>
<span class="t" style="left:320.60px;top:166.70px;font-size:13px;color:#000;transform:scaleX(0.9400);">280</span>
<span class="t" style="left:347.20px;top:493.40px;font-size:13px;color:#000;transform:scaleX(0.9400);">01</span>
<span class="t" style="left:372.33px;top:493.40px;font-size:13px;color:#000;transform:scaleX(0.9400);">02</span>
<span class="t" style="left:397.46px;top:493.40px;font-size:13px;color:#000;transform:scaleX(0.9400);">03</span>
<span class="t" style="left:422.59px;top:493.40px;font-size:13px;color:#000;transform:scaleX(0.9400);">04</span>
<span class="t" style="left:447.72px;top:493.40px;font-size:13px;color:#000;transform:scaleX(0.9400);">05</span>
<span class="t" style="left:472.85px;top:493.40px;font-size:13px;color:#000;transform:scaleX(0.9400);">06</span>
<span class="t" style="left:497.98px;top:493.40px;font-size:13px;color:#000;transform:scaleX(0.9400);">07</span>
<span class="t" style="left:523.11px;top:493.40px;font-size:13px;color:#000;transform:scaleX(0.9400);">08</span>
<span class="t" style="left:548.24px;top:493.40px;font-size:13px;color:#000;transform:scaleX(0.9400);">09</span>
<span class="t" style="left:573.37px;top:493.40px;font-size:13px;color:#000;transform:scaleX(0.9400);">10</span>
<span class="t" style="left:598.50px;top:493.40px;font-size:13px;color:#000;transform:scaleX(1.0074);">11</span>
<span class="t" style="left:623.63px;top:493.40px;font-size:13px;color:#000;transform:scaleX(0.9400);">12</span>
<span class="t" style="left:648.76px;top:493.40px;font-size:13px;color:#000;transform:scaleX(0.9400);">13</span>
<span class="t" style="left:673.89px;top:493.40px;font-size:13px;color:#000;transform:scaleX(0.9400);">14</span>
<span class="t" style="left:699.02px;top:493.40px;font-size:13px;color:#000;transform:scaleX(0.9400);">15</span>
<span class="t" style="left:724.15px;top:493.40px;font-size:13px;color:#000;transform:scaleX(0.9400);">16</span>
<span class="t" style="left:749.28px;top:493.40px;font-size:13px;color:#000;transform:scaleX(0.9400);">17</span>
<span class="t" style="left:774.41px;top:493.40px;font-size:13px;color:#000;transform:scaleX(0.9400);">18</span>
<span class="t" style="left:799.54px;top:493.40px;font-size:13px;color:#000;transform:scaleX(0.9400);">19</span>
<span class="t" style="left:824.67px;top:493.40px;font-size:13px;color:#000;transform:scaleX(0.9400);">20</span>
<span class="t" style="left:849.80px;top:493.40px;font-size:13px;color:#000;transform:scaleX(0.9400);">21</span>
<span class="t" style="left:874.93px;top:493.40px;font-size:13px;color:#000;transform:scaleX(0.9400);">22</span>
<span class="t" style="left:900.06px;top:493.40px;font-size:13px;color:#000;transform:scaleX(0.9400);">23</span>
<span class="t" style="left:925.19px;top:493.40px;font-size:13px;color:#000;transform:scaleX(0.9400);">24</span>
<span class="t" style="left:950.32px;top:493.40px;font-size:13px;color:#000;transform:scaleX(0.9400);">25</span>
<span class="t" style="left:975.45px;top:493.40px;font-size:13px;color:#000;transform:scaleX(0.9400);">26</span>
<span class="t" style="left:1000.58px;top:493.40px;font-size:13px;color:#000;transform:scaleX(0.9400);">27</span>
<span class="t" style="left:1025.71px;top:493.40px;font-size:13px;color:#000;transform:scaleX(0.9400);">28</span>
<span class="t" style="left:1050.84px;top:493.40px;font-size:13px;color:#000;transform:scaleX(0.9400);">29</span>
<span class="t" style="left:1075.97px;top:493.40px;font-size:13px;color:#000;transform:scaleX(0.9400);">30</span>
<span class="t" style="left:1101.10px;top:493.40px;font-size:13px;color:#000;transform:scaleX(0.9400);">31</span>
<div class="abs" style="left:271px;top:539px;width:759px;height:99px;box-sizing:border-box;border:1px solid #8c8c8c;background:#fff"></div>
<div style="position:absolute;left:272px;top:540px;width:757px;height:28px;background:linear-gradient(to bottom,#ffffff 0,#fbfbfb 45%,#f0f0f0 55%,#ededed 100%);border-bottom:1px solid #d8d8d8;box-sizing:border-box"></div>
<div style="position:absolute;left:1022px;top:541px;width:1px;height:25px;background:#dcdcdc"></div>
<span class="t" style="left:281.00px;top:547.45px;font-size:14px;color:#000;transform:scaleX(0.8415);">Parameter</span>
<span class="t" style="left:278.00px;top:570.55px;font-size:14px;color:#000;transform:scaleX(0.8722);">Anfragen gesamt</span>
<span class="t" style="left:278.50px;top:592.65px;font-size:14px;color:#000;transform:scaleX(0.8768);">erfolgreiche Anfragen</span>
<span class="t" style="left:278.50px;top:614.55px;font-size:14px;color:#000;transform:scaleX(0.8844);">abgelehnte Anfragen</span>
<div style="position:absolute;left:906px;top:574.5px;width:94px;height:2px;background:#10108a"></div>
<div style="position:absolute;left:906px;top:596.5px;width:94px;height:2px;background:#2ec62e"></div>
<div style="position:absolute;left:906px;top:618.5px;width:94px;height:2px;background:#c41a1a"></div>
<div class="abs" style="left:1043px;top:547px;width:101px;height:26px;box-sizing:border-box;border-radius:3px;border:1px solid #6e6e6e;background:linear-gradient(to bottom,#f4f4f4 0,#ebebeb 48%,#dadada 52%,#cecece 100%);box-shadow:inset 0 0 0 1px #fcfcfc"></div><span class="t" style="left:1062.00px;top:553.35px;font-size:14px;color:#000;transform:scaleX(0.8838);">Hinzufügen</span>
<div class="abs" style="left:1043px;top:580px;width:101px;height:26px;box-sizing:border-box;border-radius:3px;border:1px solid #c2c2c2;background:#f3f3f3"></div><span class="t" style="left:1064.60px;top:585.85px;font-size:14px;color:#9c9c9c;transform:scaleX(0.8668);">Bearbeiten</span>
<div class="abs" style="left:1043px;top:612px;width:101px;height:26px;box-sizing:border-box;border-radius:3px;border:1px solid #c2c2c2;background:#f3f3f3"></div><span class="t" style="left:1070.40px;top:617.95px;font-size:14px;color:#9c9c9c;transform:scaleX(0.8803);">Löschen</span>
</div></div></body></html>
